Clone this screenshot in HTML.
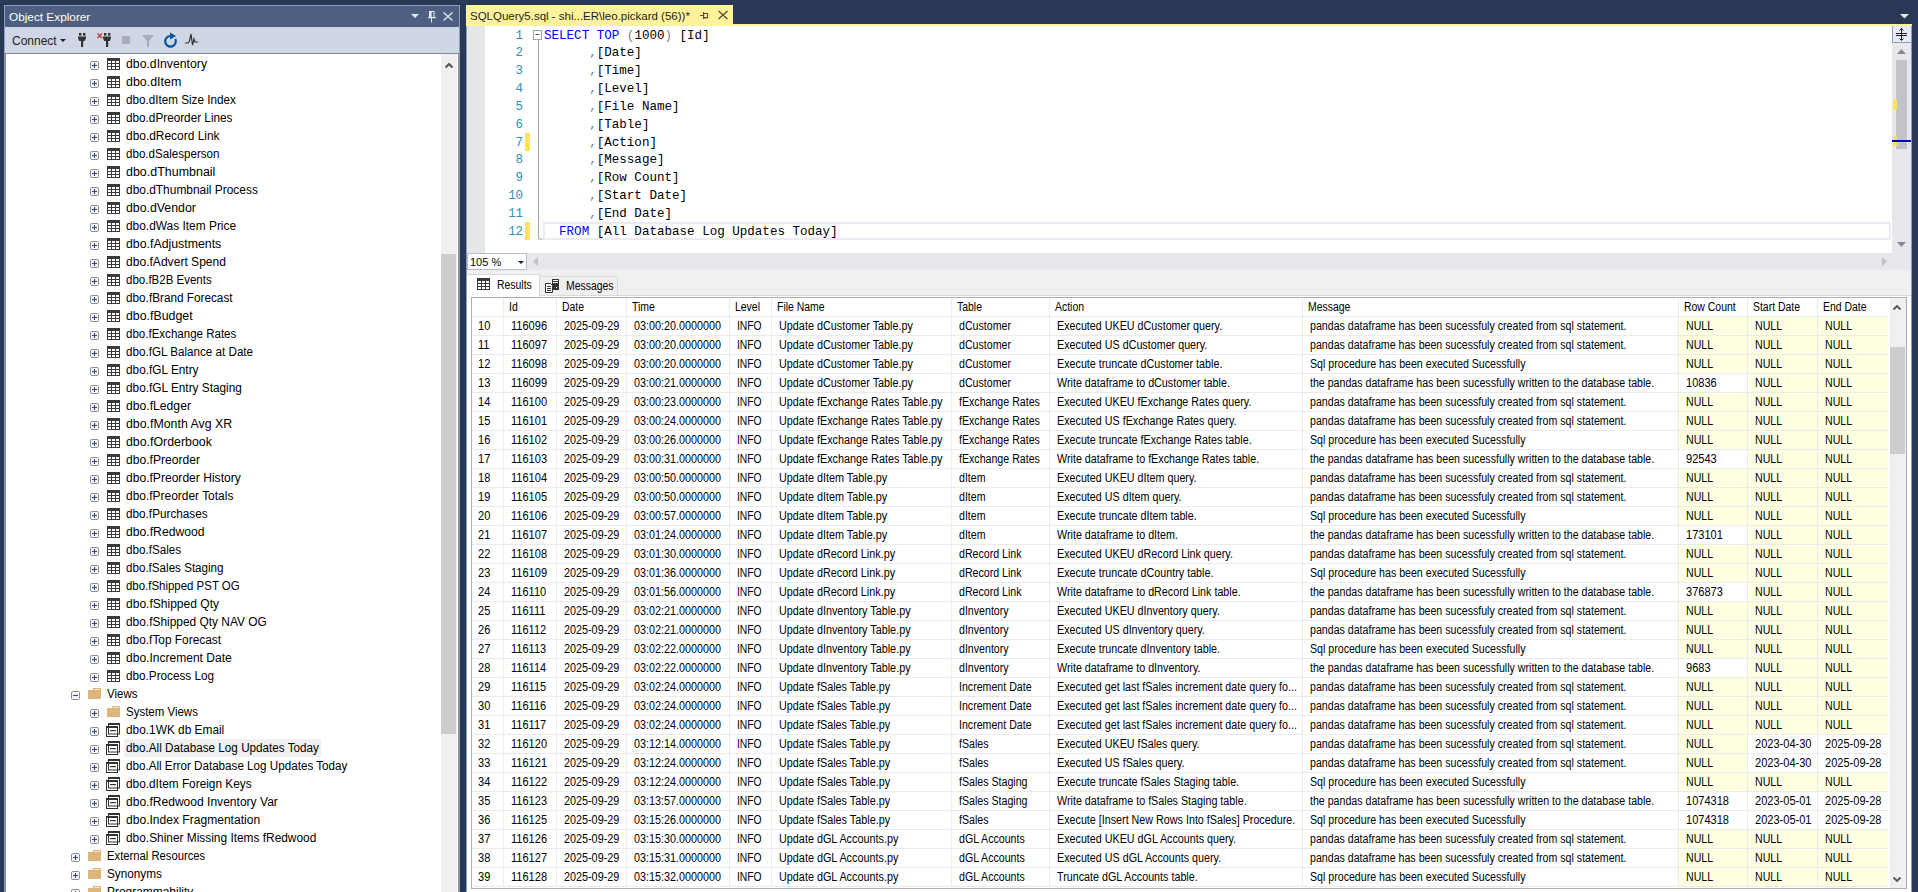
<!DOCTYPE html><html><head><meta charset="utf-8"><title>SSMS</title><style>
*{box-sizing:border-box}
html,body{margin:0;padding:0}
body{width:1918px;height:892px;position:relative;overflow:hidden;background:#293955;font-family:"Liberation Sans",sans-serif;font-size:12px;color:#1e1e1e}
.a{position:absolute}
.tx{position:absolute;white-space:nowrap;line-height:18px;height:18px}
.tr{font-size:12px;color:#000;transform-origin:0 0}
.g{position:absolute;white-space:nowrap;font-size:12px;line-height:19px;height:19px;transform-origin:0 0;color:#000}
.cd{position:absolute;white-space:pre;font-family:"Liberation Mono",monospace;font-size:12.55px;line-height:17.82px;height:18px;color:#000}
.ln{position:absolute;white-space:pre;font-family:"Liberation Mono",monospace;font-size:12.4px;line-height:17.82px;color:#2b91af;text-align:right;width:40px}
.kw{color:#0000ff}.gr{color:#808080}
.bx{position:absolute;width:9px;height:9px;border:1px solid #8c8c8c;border-radius:1.5px;background:linear-gradient(#fff,#f0f0f0)}
</style></head><body>
<div class="a" style="left:4px;top:5px;width:456px;height:887px;border:1px solid #8d9cc0;border-bottom:none;background:#cfd6e5"></div>
<div class="a" style="left:5px;top:6px;width:454px;height:21px;background:#4d6082"></div>
<div class="tx" style="left:9px;top:8px;color:#fff;font-size:11.8px">Object Explorer</div>
<svg class="a" style="left:405px;top:6px" width="54" height="21" viewBox="0 0 54 21"><path d="M6 8h8l-4 4z" fill="#e6e9f0"/><rect x="24.5" y="5.5" width="4.5" height="6" fill="none" stroke="#e6e9f0"/><rect x="25" y="5" width="1.6" height="7" fill="#e6e9f0"/><rect x="23" y="11" width="8" height="1.2" fill="#e6e9f0"/><rect x="26" y="12" width="1" height="4.5" fill="#e6e9f0"/><path d="M38.5 6.5l9 8M47.5 6.5l-9 8" stroke="#e6e9f0" stroke-width="1.3"/></svg>
<div class="tx" style="left:12px;top:32px;color:#1e1e1e;font-size:12px">Connect</div>
<svg class="a" style="left:0;top:27px" width="210" height="26" viewBox="0 0 210 26"><path d="M60 12h6l-3 3z" fill="#1e1e1e"/><rect x="79" y="6" width="2.4" height="2.6" fill="#333"/><rect x="83" y="6" width="2.4" height="2.6" fill="#333"/><path d="M78 9.6h8v1.4l-1.2 3h-5.6l-1.2-3z" fill="#333"/><rect x="81" y="13.5" width="2.2" height="6.5" fill="#333"/><path d="M97.5 6.5l4.5 4.5M102 6.5l-4.5 4.5" stroke="#c9362c" stroke-width="1.2"/><rect x="104" y="6" width="2.4" height="2.6" fill="#333"/><rect x="108" y="6" width="2.4" height="2.6" fill="#333"/><path d="M103 9.6h8v1.4l-1.2 3h-5.6l-1.2-3z" fill="#333"/><rect x="106" y="13.5" width="2.2" height="6.5" fill="#333"/><rect x="122" y="9" width="8" height="8" fill="#a8adb9"/><path d="M142 8h12l-5 6v6h-2v-6z" fill="#a8adb9"/><path d="M170.5 9A5.3 5.3 0 1 0 175.3 12" fill="none" stroke="#00539c" stroke-width="2.2"/><path d="M170 5.6l6 3.4l-6 3.4z" fill="#00539c"/><path d="M185 16h3l1.5 -2l1.5 -7l1.5 11l1.5 -6l1 3h3" fill="none" stroke="#333" stroke-width="1.2"/></svg>
<div class="a" style="left:5px;top:53px;width:454px;height:1px;background:#828a99"></div>
<div class="a" style="left:5px;top:54px;width:454px;height:838px;background:#fff;overflow:hidden">
<svg class="a" style="left:85px;top:7px" width="9" height="9" viewBox="0 0 9 9"><rect x="0.5" y="0.5" width="8" height="8" rx="1.2" fill="#f7f7f7" stroke="#8c8c8c"/><path d="M2 4.5h5" stroke="#2e4d8f" stroke-width="1.1"/><path d="M4.5 2v5" stroke="#2e4d8f" stroke-width="1.1"/></svg>
<svg class="a" style="left:102px;top:4px" width="13" height="12" viewBox="0 0 13 12"><rect width="13" height="12" fill="#3a3a3a"/><rect x="1" y="3" width="3" height="2" fill="#fff"/><rect x="1" y="6" width="3" height="2" fill="#fff"/><rect x="1" y="9" width="3" height="2" fill="#fff"/><rect x="5" y="3" width="3" height="2" fill="#fff"/><rect x="5" y="6" width="3" height="2" fill="#fff"/><rect x="5" y="9" width="3" height="2" fill="#fff"/><rect x="9" y="3" width="3" height="2" fill="#fff"/><rect x="9" y="6" width="3" height="2" fill="#fff"/><rect x="9" y="9" width="3" height="2" fill="#fff"/></svg>
<div class="tx tr" style="left:121px;top:1px;transform:scaleX(1.0208)">dbo.dInventory</div>
<svg class="a" style="left:85px;top:25px" width="9" height="9" viewBox="0 0 9 9"><rect x="0.5" y="0.5" width="8" height="8" rx="1.2" fill="#f7f7f7" stroke="#8c8c8c"/><path d="M2 4.5h5" stroke="#2e4d8f" stroke-width="1.1"/><path d="M4.5 2v5" stroke="#2e4d8f" stroke-width="1.1"/></svg>
<svg class="a" style="left:102px;top:22px" width="13" height="12" viewBox="0 0 13 12"><rect width="13" height="12" fill="#3a3a3a"/><rect x="1" y="3" width="3" height="2" fill="#fff"/><rect x="1" y="6" width="3" height="2" fill="#fff"/><rect x="1" y="9" width="3" height="2" fill="#fff"/><rect x="5" y="3" width="3" height="2" fill="#fff"/><rect x="5" y="6" width="3" height="2" fill="#fff"/><rect x="5" y="9" width="3" height="2" fill="#fff"/><rect x="9" y="3" width="3" height="2" fill="#fff"/><rect x="9" y="6" width="3" height="2" fill="#fff"/><rect x="9" y="9" width="3" height="2" fill="#fff"/></svg>
<div class="tx tr" style="left:121px;top:19px;transform:scaleX(1.0364)">dbo.dItem</div>
<svg class="a" style="left:85px;top:43px" width="9" height="9" viewBox="0 0 9 9"><rect x="0.5" y="0.5" width="8" height="8" rx="1.2" fill="#f7f7f7" stroke="#8c8c8c"/><path d="M2 4.5h5" stroke="#2e4d8f" stroke-width="1.1"/><path d="M4.5 2v5" stroke="#2e4d8f" stroke-width="1.1"/></svg>
<svg class="a" style="left:102px;top:40px" width="13" height="12" viewBox="0 0 13 12"><rect width="13" height="12" fill="#3a3a3a"/><rect x="1" y="3" width="3" height="2" fill="#fff"/><rect x="1" y="6" width="3" height="2" fill="#fff"/><rect x="1" y="9" width="3" height="2" fill="#fff"/><rect x="5" y="3" width="3" height="2" fill="#fff"/><rect x="5" y="6" width="3" height="2" fill="#fff"/><rect x="5" y="9" width="3" height="2" fill="#fff"/><rect x="9" y="3" width="3" height="2" fill="#fff"/><rect x="9" y="6" width="3" height="2" fill="#fff"/><rect x="9" y="9" width="3" height="2" fill="#fff"/></svg>
<div class="tx tr" style="left:121px;top:37px;transform:scaleX(0.9740)">dbo.dItem Size Index</div>
<svg class="a" style="left:85px;top:61px" width="9" height="9" viewBox="0 0 9 9"><rect x="0.5" y="0.5" width="8" height="8" rx="1.2" fill="#f7f7f7" stroke="#8c8c8c"/><path d="M2 4.5h5" stroke="#2e4d8f" stroke-width="1.1"/><path d="M4.5 2v5" stroke="#2e4d8f" stroke-width="1.1"/></svg>
<svg class="a" style="left:102px;top:58px" width="13" height="12" viewBox="0 0 13 12"><rect width="13" height="12" fill="#3a3a3a"/><rect x="1" y="3" width="3" height="2" fill="#fff"/><rect x="1" y="6" width="3" height="2" fill="#fff"/><rect x="1" y="9" width="3" height="2" fill="#fff"/><rect x="5" y="3" width="3" height="2" fill="#fff"/><rect x="5" y="6" width="3" height="2" fill="#fff"/><rect x="5" y="9" width="3" height="2" fill="#fff"/><rect x="9" y="3" width="3" height="2" fill="#fff"/><rect x="9" y="6" width="3" height="2" fill="#fff"/><rect x="9" y="9" width="3" height="2" fill="#fff"/></svg>
<div class="tx tr" style="left:121px;top:55px;transform:scaleX(0.9789)">dbo.dPreorder Lines</div>
<svg class="a" style="left:85px;top:79px" width="9" height="9" viewBox="0 0 9 9"><rect x="0.5" y="0.5" width="8" height="8" rx="1.2" fill="#f7f7f7" stroke="#8c8c8c"/><path d="M2 4.5h5" stroke="#2e4d8f" stroke-width="1.1"/><path d="M4.5 2v5" stroke="#2e4d8f" stroke-width="1.1"/></svg>
<svg class="a" style="left:102px;top:76px" width="13" height="12" viewBox="0 0 13 12"><rect width="13" height="12" fill="#3a3a3a"/><rect x="1" y="3" width="3" height="2" fill="#fff"/><rect x="1" y="6" width="3" height="2" fill="#fff"/><rect x="1" y="9" width="3" height="2" fill="#fff"/><rect x="5" y="3" width="3" height="2" fill="#fff"/><rect x="5" y="6" width="3" height="2" fill="#fff"/><rect x="5" y="9" width="3" height="2" fill="#fff"/><rect x="9" y="3" width="3" height="2" fill="#fff"/><rect x="9" y="6" width="3" height="2" fill="#fff"/><rect x="9" y="9" width="3" height="2" fill="#fff"/></svg>
<div class="tx tr" style="left:121px;top:73px;transform:scaleX(0.9945)">dbo.dRecord Link</div>
<svg class="a" style="left:85px;top:97px" width="9" height="9" viewBox="0 0 9 9"><rect x="0.5" y="0.5" width="8" height="8" rx="1.2" fill="#f7f7f7" stroke="#8c8c8c"/><path d="M2 4.5h5" stroke="#2e4d8f" stroke-width="1.1"/><path d="M4.5 2v5" stroke="#2e4d8f" stroke-width="1.1"/></svg>
<svg class="a" style="left:102px;top:94px" width="13" height="12" viewBox="0 0 13 12"><rect width="13" height="12" fill="#3a3a3a"/><rect x="1" y="3" width="3" height="2" fill="#fff"/><rect x="1" y="6" width="3" height="2" fill="#fff"/><rect x="1" y="9" width="3" height="2" fill="#fff"/><rect x="5" y="3" width="3" height="2" fill="#fff"/><rect x="5" y="6" width="3" height="2" fill="#fff"/><rect x="5" y="9" width="3" height="2" fill="#fff"/><rect x="9" y="3" width="3" height="2" fill="#fff"/><rect x="9" y="6" width="3" height="2" fill="#fff"/><rect x="9" y="9" width="3" height="2" fill="#fff"/></svg>
<div class="tx tr" style="left:121px;top:91px;transform:scaleX(0.9662)">dbo.dSalesperson</div>
<svg class="a" style="left:85px;top:115px" width="9" height="9" viewBox="0 0 9 9"><rect x="0.5" y="0.5" width="8" height="8" rx="1.2" fill="#f7f7f7" stroke="#8c8c8c"/><path d="M2 4.5h5" stroke="#2e4d8f" stroke-width="1.1"/><path d="M4.5 2v5" stroke="#2e4d8f" stroke-width="1.1"/></svg>
<svg class="a" style="left:102px;top:112px" width="13" height="12" viewBox="0 0 13 12"><rect width="13" height="12" fill="#3a3a3a"/><rect x="1" y="3" width="3" height="2" fill="#fff"/><rect x="1" y="6" width="3" height="2" fill="#fff"/><rect x="1" y="9" width="3" height="2" fill="#fff"/><rect x="5" y="3" width="3" height="2" fill="#fff"/><rect x="5" y="6" width="3" height="2" fill="#fff"/><rect x="5" y="9" width="3" height="2" fill="#fff"/><rect x="9" y="3" width="3" height="2" fill="#fff"/><rect x="9" y="6" width="3" height="2" fill="#fff"/><rect x="9" y="9" width="3" height="2" fill="#fff"/></svg>
<div class="tx tr" style="left:121px;top:109px;transform:scaleX(1.0384)">dbo.dThumbnail</div>
<svg class="a" style="left:85px;top:133px" width="9" height="9" viewBox="0 0 9 9"><rect x="0.5" y="0.5" width="8" height="8" rx="1.2" fill="#f7f7f7" stroke="#8c8c8c"/><path d="M2 4.5h5" stroke="#2e4d8f" stroke-width="1.1"/><path d="M4.5 2v5" stroke="#2e4d8f" stroke-width="1.1"/></svg>
<svg class="a" style="left:102px;top:130px" width="13" height="12" viewBox="0 0 13 12"><rect width="13" height="12" fill="#3a3a3a"/><rect x="1" y="3" width="3" height="2" fill="#fff"/><rect x="1" y="6" width="3" height="2" fill="#fff"/><rect x="1" y="9" width="3" height="2" fill="#fff"/><rect x="5" y="3" width="3" height="2" fill="#fff"/><rect x="5" y="6" width="3" height="2" fill="#fff"/><rect x="5" y="9" width="3" height="2" fill="#fff"/><rect x="9" y="3" width="3" height="2" fill="#fff"/><rect x="9" y="6" width="3" height="2" fill="#fff"/><rect x="9" y="9" width="3" height="2" fill="#fff"/></svg>
<div class="tx tr" style="left:121px;top:127px;transform:scaleX(0.9935)">dbo.dThumbnail Process</div>
<svg class="a" style="left:85px;top:151px" width="9" height="9" viewBox="0 0 9 9"><rect x="0.5" y="0.5" width="8" height="8" rx="1.2" fill="#f7f7f7" stroke="#8c8c8c"/><path d="M2 4.5h5" stroke="#2e4d8f" stroke-width="1.1"/><path d="M4.5 2v5" stroke="#2e4d8f" stroke-width="1.1"/></svg>
<svg class="a" style="left:102px;top:148px" width="13" height="12" viewBox="0 0 13 12"><rect width="13" height="12" fill="#3a3a3a"/><rect x="1" y="3" width="3" height="2" fill="#fff"/><rect x="1" y="6" width="3" height="2" fill="#fff"/><rect x="1" y="9" width="3" height="2" fill="#fff"/><rect x="5" y="3" width="3" height="2" fill="#fff"/><rect x="5" y="6" width="3" height="2" fill="#fff"/><rect x="5" y="9" width="3" height="2" fill="#fff"/><rect x="9" y="3" width="3" height="2" fill="#fff"/><rect x="9" y="6" width="3" height="2" fill="#fff"/><rect x="9" y="9" width="3" height="2" fill="#fff"/></svg>
<div class="tx tr" style="left:121px;top:145px;transform:scaleX(1.0267)">dbo.dVendor</div>
<svg class="a" style="left:85px;top:169px" width="9" height="9" viewBox="0 0 9 9"><rect x="0.5" y="0.5" width="8" height="8" rx="1.2" fill="#f7f7f7" stroke="#8c8c8c"/><path d="M2 4.5h5" stroke="#2e4d8f" stroke-width="1.1"/><path d="M4.5 2v5" stroke="#2e4d8f" stroke-width="1.1"/></svg>
<svg class="a" style="left:102px;top:166px" width="13" height="12" viewBox="0 0 13 12"><rect width="13" height="12" fill="#3a3a3a"/><rect x="1" y="3" width="3" height="2" fill="#fff"/><rect x="1" y="6" width="3" height="2" fill="#fff"/><rect x="1" y="9" width="3" height="2" fill="#fff"/><rect x="5" y="3" width="3" height="2" fill="#fff"/><rect x="5" y="6" width="3" height="2" fill="#fff"/><rect x="5" y="9" width="3" height="2" fill="#fff"/><rect x="9" y="3" width="3" height="2" fill="#fff"/><rect x="9" y="6" width="3" height="2" fill="#fff"/><rect x="9" y="9" width="3" height="2" fill="#fff"/></svg>
<div class="tx tr" style="left:121px;top:163px;transform:scaleX(0.9925)">dbo.dWas Item Price</div>
<svg class="a" style="left:85px;top:187px" width="9" height="9" viewBox="0 0 9 9"><rect x="0.5" y="0.5" width="8" height="8" rx="1.2" fill="#f7f7f7" stroke="#8c8c8c"/><path d="M2 4.5h5" stroke="#2e4d8f" stroke-width="1.1"/><path d="M4.5 2v5" stroke="#2e4d8f" stroke-width="1.1"/></svg>
<svg class="a" style="left:102px;top:184px" width="13" height="12" viewBox="0 0 13 12"><rect width="13" height="12" fill="#3a3a3a"/><rect x="1" y="3" width="3" height="2" fill="#fff"/><rect x="1" y="6" width="3" height="2" fill="#fff"/><rect x="1" y="9" width="3" height="2" fill="#fff"/><rect x="5" y="3" width="3" height="2" fill="#fff"/><rect x="5" y="6" width="3" height="2" fill="#fff"/><rect x="5" y="9" width="3" height="2" fill="#fff"/><rect x="9" y="3" width="3" height="2" fill="#fff"/><rect x="9" y="6" width="3" height="2" fill="#fff"/><rect x="9" y="9" width="3" height="2" fill="#fff"/></svg>
<div class="tx tr" style="left:121px;top:181px;transform:scaleX(1.0276)">dbo.fAdjustments</div>
<svg class="a" style="left:85px;top:205px" width="9" height="9" viewBox="0 0 9 9"><rect x="0.5" y="0.5" width="8" height="8" rx="1.2" fill="#f7f7f7" stroke="#8c8c8c"/><path d="M2 4.5h5" stroke="#2e4d8f" stroke-width="1.1"/><path d="M4.5 2v5" stroke="#2e4d8f" stroke-width="1.1"/></svg>
<svg class="a" style="left:102px;top:202px" width="13" height="12" viewBox="0 0 13 12"><rect width="13" height="12" fill="#3a3a3a"/><rect x="1" y="3" width="3" height="2" fill="#fff"/><rect x="1" y="6" width="3" height="2" fill="#fff"/><rect x="1" y="9" width="3" height="2" fill="#fff"/><rect x="5" y="3" width="3" height="2" fill="#fff"/><rect x="5" y="6" width="3" height="2" fill="#fff"/><rect x="5" y="9" width="3" height="2" fill="#fff"/><rect x="9" y="3" width="3" height="2" fill="#fff"/><rect x="9" y="6" width="3" height="2" fill="#fff"/><rect x="9" y="9" width="3" height="2" fill="#fff"/></svg>
<div class="tx tr" style="left:121px;top:199px;transform:scaleX(1.0062)">dbo.fAdvert Spend</div>
<svg class="a" style="left:85px;top:223px" width="9" height="9" viewBox="0 0 9 9"><rect x="0.5" y="0.5" width="8" height="8" rx="1.2" fill="#f7f7f7" stroke="#8c8c8c"/><path d="M2 4.5h5" stroke="#2e4d8f" stroke-width="1.1"/><path d="M4.5 2v5" stroke="#2e4d8f" stroke-width="1.1"/></svg>
<svg class="a" style="left:102px;top:220px" width="13" height="12" viewBox="0 0 13 12"><rect width="13" height="12" fill="#3a3a3a"/><rect x="1" y="3" width="3" height="2" fill="#fff"/><rect x="1" y="6" width="3" height="2" fill="#fff"/><rect x="1" y="9" width="3" height="2" fill="#fff"/><rect x="5" y="3" width="3" height="2" fill="#fff"/><rect x="5" y="6" width="3" height="2" fill="#fff"/><rect x="5" y="9" width="3" height="2" fill="#fff"/><rect x="9" y="3" width="3" height="2" fill="#fff"/><rect x="9" y="6" width="3" height="2" fill="#fff"/><rect x="9" y="9" width="3" height="2" fill="#fff"/></svg>
<div class="tx tr" style="left:121px;top:217px;transform:scaleX(0.9584)">dbo.fB2B Events</div>
<svg class="a" style="left:85px;top:241px" width="9" height="9" viewBox="0 0 9 9"><rect x="0.5" y="0.5" width="8" height="8" rx="1.2" fill="#f7f7f7" stroke="#8c8c8c"/><path d="M2 4.5h5" stroke="#2e4d8f" stroke-width="1.1"/><path d="M4.5 2v5" stroke="#2e4d8f" stroke-width="1.1"/></svg>
<svg class="a" style="left:102px;top:238px" width="13" height="12" viewBox="0 0 13 12"><rect width="13" height="12" fill="#3a3a3a"/><rect x="1" y="3" width="3" height="2" fill="#fff"/><rect x="1" y="6" width="3" height="2" fill="#fff"/><rect x="1" y="9" width="3" height="2" fill="#fff"/><rect x="5" y="3" width="3" height="2" fill="#fff"/><rect x="5" y="6" width="3" height="2" fill="#fff"/><rect x="5" y="9" width="3" height="2" fill="#fff"/><rect x="9" y="3" width="3" height="2" fill="#fff"/><rect x="9" y="6" width="3" height="2" fill="#fff"/><rect x="9" y="9" width="3" height="2" fill="#fff"/></svg>
<div class="tx tr" style="left:121px;top:235px;transform:scaleX(0.9799)">dbo.fBrand Forecast</div>
<svg class="a" style="left:85px;top:259px" width="9" height="9" viewBox="0 0 9 9"><rect x="0.5" y="0.5" width="8" height="8" rx="1.2" fill="#f7f7f7" stroke="#8c8c8c"/><path d="M2 4.5h5" stroke="#2e4d8f" stroke-width="1.1"/><path d="M4.5 2v5" stroke="#2e4d8f" stroke-width="1.1"/></svg>
<svg class="a" style="left:102px;top:256px" width="13" height="12" viewBox="0 0 13 12"><rect width="13" height="12" fill="#3a3a3a"/><rect x="1" y="3" width="3" height="2" fill="#fff"/><rect x="1" y="6" width="3" height="2" fill="#fff"/><rect x="1" y="9" width="3" height="2" fill="#fff"/><rect x="5" y="3" width="3" height="2" fill="#fff"/><rect x="5" y="6" width="3" height="2" fill="#fff"/><rect x="5" y="9" width="3" height="2" fill="#fff"/><rect x="9" y="3" width="3" height="2" fill="#fff"/><rect x="9" y="6" width="3" height="2" fill="#fff"/><rect x="9" y="9" width="3" height="2" fill="#fff"/></svg>
<div class="tx tr" style="left:121px;top:253px;transform:scaleX(1.0296)">dbo.fBudget</div>
<svg class="a" style="left:85px;top:277px" width="9" height="9" viewBox="0 0 9 9"><rect x="0.5" y="0.5" width="8" height="8" rx="1.2" fill="#f7f7f7" stroke="#8c8c8c"/><path d="M2 4.5h5" stroke="#2e4d8f" stroke-width="1.1"/><path d="M4.5 2v5" stroke="#2e4d8f" stroke-width="1.1"/></svg>
<svg class="a" style="left:102px;top:274px" width="13" height="12" viewBox="0 0 13 12"><rect width="13" height="12" fill="#3a3a3a"/><rect x="1" y="3" width="3" height="2" fill="#fff"/><rect x="1" y="6" width="3" height="2" fill="#fff"/><rect x="1" y="9" width="3" height="2" fill="#fff"/><rect x="5" y="3" width="3" height="2" fill="#fff"/><rect x="5" y="6" width="3" height="2" fill="#fff"/><rect x="5" y="9" width="3" height="2" fill="#fff"/><rect x="9" y="3" width="3" height="2" fill="#fff"/><rect x="9" y="6" width="3" height="2" fill="#fff"/><rect x="9" y="9" width="3" height="2" fill="#fff"/></svg>
<div class="tx tr" style="left:121px;top:271px;transform:scaleX(0.9613)">dbo.fExchange Rates</div>
<svg class="a" style="left:85px;top:295px" width="9" height="9" viewBox="0 0 9 9"><rect x="0.5" y="0.5" width="8" height="8" rx="1.2" fill="#f7f7f7" stroke="#8c8c8c"/><path d="M2 4.5h5" stroke="#2e4d8f" stroke-width="1.1"/><path d="M4.5 2v5" stroke="#2e4d8f" stroke-width="1.1"/></svg>
<svg class="a" style="left:102px;top:292px" width="13" height="12" viewBox="0 0 13 12"><rect width="13" height="12" fill="#3a3a3a"/><rect x="1" y="3" width="3" height="2" fill="#fff"/><rect x="1" y="6" width="3" height="2" fill="#fff"/><rect x="1" y="9" width="3" height="2" fill="#fff"/><rect x="5" y="3" width="3" height="2" fill="#fff"/><rect x="5" y="6" width="3" height="2" fill="#fff"/><rect x="5" y="9" width="3" height="2" fill="#fff"/><rect x="9" y="3" width="3" height="2" fill="#fff"/><rect x="9" y="6" width="3" height="2" fill="#fff"/><rect x="9" y="9" width="3" height="2" fill="#fff"/></svg>
<div class="tx tr" style="left:121px;top:289px;transform:scaleX(0.9701)">dbo.fGL Balance at Date</div>
<svg class="a" style="left:85px;top:313px" width="9" height="9" viewBox="0 0 9 9"><rect x="0.5" y="0.5" width="8" height="8" rx="1.2" fill="#f7f7f7" stroke="#8c8c8c"/><path d="M2 4.5h5" stroke="#2e4d8f" stroke-width="1.1"/><path d="M4.5 2v5" stroke="#2e4d8f" stroke-width="1.1"/></svg>
<svg class="a" style="left:102px;top:310px" width="13" height="12" viewBox="0 0 13 12"><rect width="13" height="12" fill="#3a3a3a"/><rect x="1" y="3" width="3" height="2" fill="#fff"/><rect x="1" y="6" width="3" height="2" fill="#fff"/><rect x="1" y="9" width="3" height="2" fill="#fff"/><rect x="5" y="3" width="3" height="2" fill="#fff"/><rect x="5" y="6" width="3" height="2" fill="#fff"/><rect x="5" y="9" width="3" height="2" fill="#fff"/><rect x="9" y="3" width="3" height="2" fill="#fff"/><rect x="9" y="6" width="3" height="2" fill="#fff"/><rect x="9" y="9" width="3" height="2" fill="#fff"/></svg>
<div class="tx tr" style="left:121px;top:307px;transform:scaleX(0.9848)">dbo.fGL Entry</div>
<svg class="a" style="left:85px;top:331px" width="9" height="9" viewBox="0 0 9 9"><rect x="0.5" y="0.5" width="8" height="8" rx="1.2" fill="#f7f7f7" stroke="#8c8c8c"/><path d="M2 4.5h5" stroke="#2e4d8f" stroke-width="1.1"/><path d="M4.5 2v5" stroke="#2e4d8f" stroke-width="1.1"/></svg>
<svg class="a" style="left:102px;top:328px" width="13" height="12" viewBox="0 0 13 12"><rect width="13" height="12" fill="#3a3a3a"/><rect x="1" y="3" width="3" height="2" fill="#fff"/><rect x="1" y="6" width="3" height="2" fill="#fff"/><rect x="1" y="9" width="3" height="2" fill="#fff"/><rect x="5" y="3" width="3" height="2" fill="#fff"/><rect x="5" y="6" width="3" height="2" fill="#fff"/><rect x="5" y="9" width="3" height="2" fill="#fff"/><rect x="9" y="3" width="3" height="2" fill="#fff"/><rect x="9" y="6" width="3" height="2" fill="#fff"/><rect x="9" y="9" width="3" height="2" fill="#fff"/></svg>
<div class="tx tr" style="left:121px;top:325px;transform:scaleX(0.9848)">dbo.fGL Entry Staging</div>
<svg class="a" style="left:85px;top:349px" width="9" height="9" viewBox="0 0 9 9"><rect x="0.5" y="0.5" width="8" height="8" rx="1.2" fill="#f7f7f7" stroke="#8c8c8c"/><path d="M2 4.5h5" stroke="#2e4d8f" stroke-width="1.1"/><path d="M4.5 2v5" stroke="#2e4d8f" stroke-width="1.1"/></svg>
<svg class="a" style="left:102px;top:346px" width="13" height="12" viewBox="0 0 13 12"><rect width="13" height="12" fill="#3a3a3a"/><rect x="1" y="3" width="3" height="2" fill="#fff"/><rect x="1" y="6" width="3" height="2" fill="#fff"/><rect x="1" y="9" width="3" height="2" fill="#fff"/><rect x="5" y="3" width="3" height="2" fill="#fff"/><rect x="5" y="6" width="3" height="2" fill="#fff"/><rect x="5" y="9" width="3" height="2" fill="#fff"/><rect x="9" y="3" width="3" height="2" fill="#fff"/><rect x="9" y="6" width="3" height="2" fill="#fff"/><rect x="9" y="9" width="3" height="2" fill="#fff"/></svg>
<div class="tx tr" style="left:121px;top:343px;transform:scaleX(1.0140)">dbo.fLedger</div>
<svg class="a" style="left:85px;top:367px" width="9" height="9" viewBox="0 0 9 9"><rect x="0.5" y="0.5" width="8" height="8" rx="1.2" fill="#f7f7f7" stroke="#8c8c8c"/><path d="M2 4.5h5" stroke="#2e4d8f" stroke-width="1.1"/><path d="M4.5 2v5" stroke="#2e4d8f" stroke-width="1.1"/></svg>
<svg class="a" style="left:102px;top:364px" width="13" height="12" viewBox="0 0 13 12"><rect width="13" height="12" fill="#3a3a3a"/><rect x="1" y="3" width="3" height="2" fill="#fff"/><rect x="1" y="6" width="3" height="2" fill="#fff"/><rect x="1" y="9" width="3" height="2" fill="#fff"/><rect x="5" y="3" width="3" height="2" fill="#fff"/><rect x="5" y="6" width="3" height="2" fill="#fff"/><rect x="5" y="9" width="3" height="2" fill="#fff"/><rect x="9" y="3" width="3" height="2" fill="#fff"/><rect x="9" y="6" width="3" height="2" fill="#fff"/><rect x="9" y="9" width="3" height="2" fill="#fff"/></svg>
<div class="tx tr" style="left:121px;top:361px;transform:scaleX(1.0286)">dbo.fMonth Avg XR</div>
<svg class="a" style="left:85px;top:385px" width="9" height="9" viewBox="0 0 9 9"><rect x="0.5" y="0.5" width="8" height="8" rx="1.2" fill="#f7f7f7" stroke="#8c8c8c"/><path d="M2 4.5h5" stroke="#2e4d8f" stroke-width="1.1"/><path d="M4.5 2v5" stroke="#2e4d8f" stroke-width="1.1"/></svg>
<svg class="a" style="left:102px;top:382px" width="13" height="12" viewBox="0 0 13 12"><rect width="13" height="12" fill="#3a3a3a"/><rect x="1" y="3" width="3" height="2" fill="#fff"/><rect x="1" y="6" width="3" height="2" fill="#fff"/><rect x="1" y="9" width="3" height="2" fill="#fff"/><rect x="5" y="3" width="3" height="2" fill="#fff"/><rect x="5" y="6" width="3" height="2" fill="#fff"/><rect x="5" y="9" width="3" height="2" fill="#fff"/><rect x="9" y="3" width="3" height="2" fill="#fff"/><rect x="9" y="6" width="3" height="2" fill="#fff"/><rect x="9" y="9" width="3" height="2" fill="#fff"/></svg>
<div class="tx tr" style="left:121px;top:379px;transform:scaleX(1.0296)">dbo.fOrderbook</div>
<svg class="a" style="left:85px;top:403px" width="9" height="9" viewBox="0 0 9 9"><rect x="0.5" y="0.5" width="8" height="8" rx="1.2" fill="#f7f7f7" stroke="#8c8c8c"/><path d="M2 4.5h5" stroke="#2e4d8f" stroke-width="1.1"/><path d="M4.5 2v5" stroke="#2e4d8f" stroke-width="1.1"/></svg>
<svg class="a" style="left:102px;top:400px" width="13" height="12" viewBox="0 0 13 12"><rect width="13" height="12" fill="#3a3a3a"/><rect x="1" y="3" width="3" height="2" fill="#fff"/><rect x="1" y="6" width="3" height="2" fill="#fff"/><rect x="1" y="9" width="3" height="2" fill="#fff"/><rect x="5" y="3" width="3" height="2" fill="#fff"/><rect x="5" y="6" width="3" height="2" fill="#fff"/><rect x="5" y="9" width="3" height="2" fill="#fff"/><rect x="9" y="3" width="3" height="2" fill="#fff"/><rect x="9" y="6" width="3" height="2" fill="#fff"/><rect x="9" y="9" width="3" height="2" fill="#fff"/></svg>
<div class="tx tr" style="left:121px;top:397px;transform:scaleX(1.0081)">dbo.fPreorder</div>
<svg class="a" style="left:85px;top:421px" width="9" height="9" viewBox="0 0 9 9"><rect x="0.5" y="0.5" width="8" height="8" rx="1.2" fill="#f7f7f7" stroke="#8c8c8c"/><path d="M2 4.5h5" stroke="#2e4d8f" stroke-width="1.1"/><path d="M4.5 2v5" stroke="#2e4d8f" stroke-width="1.1"/></svg>
<svg class="a" style="left:102px;top:418px" width="13" height="12" viewBox="0 0 13 12"><rect width="13" height="12" fill="#3a3a3a"/><rect x="1" y="3" width="3" height="2" fill="#fff"/><rect x="1" y="6" width="3" height="2" fill="#fff"/><rect x="1" y="9" width="3" height="2" fill="#fff"/><rect x="5" y="3" width="3" height="2" fill="#fff"/><rect x="5" y="6" width="3" height="2" fill="#fff"/><rect x="5" y="9" width="3" height="2" fill="#fff"/><rect x="9" y="3" width="3" height="2" fill="#fff"/><rect x="9" y="6" width="3" height="2" fill="#fff"/><rect x="9" y="9" width="3" height="2" fill="#fff"/></svg>
<div class="tx tr" style="left:121px;top:415px;transform:scaleX(1.0062)">dbo.fPreorder History</div>
<svg class="a" style="left:85px;top:439px" width="9" height="9" viewBox="0 0 9 9"><rect x="0.5" y="0.5" width="8" height="8" rx="1.2" fill="#f7f7f7" stroke="#8c8c8c"/><path d="M2 4.5h5" stroke="#2e4d8f" stroke-width="1.1"/><path d="M4.5 2v5" stroke="#2e4d8f" stroke-width="1.1"/></svg>
<svg class="a" style="left:102px;top:436px" width="13" height="12" viewBox="0 0 13 12"><rect width="13" height="12" fill="#3a3a3a"/><rect x="1" y="3" width="3" height="2" fill="#fff"/><rect x="1" y="6" width="3" height="2" fill="#fff"/><rect x="1" y="9" width="3" height="2" fill="#fff"/><rect x="5" y="3" width="3" height="2" fill="#fff"/><rect x="5" y="6" width="3" height="2" fill="#fff"/><rect x="5" y="9" width="3" height="2" fill="#fff"/><rect x="9" y="3" width="3" height="2" fill="#fff"/><rect x="9" y="6" width="3" height="2" fill="#fff"/><rect x="9" y="9" width="3" height="2" fill="#fff"/></svg>
<div class="tx tr" style="left:121px;top:433px;transform:scaleX(0.9955)">dbo.fPreorder Totals</div>
<svg class="a" style="left:85px;top:457px" width="9" height="9" viewBox="0 0 9 9"><rect x="0.5" y="0.5" width="8" height="8" rx="1.2" fill="#f7f7f7" stroke="#8c8c8c"/><path d="M2 4.5h5" stroke="#2e4d8f" stroke-width="1.1"/><path d="M4.5 2v5" stroke="#2e4d8f" stroke-width="1.1"/></svg>
<svg class="a" style="left:102px;top:454px" width="13" height="12" viewBox="0 0 13 12"><rect width="13" height="12" fill="#3a3a3a"/><rect x="1" y="3" width="3" height="2" fill="#fff"/><rect x="1" y="6" width="3" height="2" fill="#fff"/><rect x="1" y="9" width="3" height="2" fill="#fff"/><rect x="5" y="3" width="3" height="2" fill="#fff"/><rect x="5" y="6" width="3" height="2" fill="#fff"/><rect x="5" y="9" width="3" height="2" fill="#fff"/><rect x="9" y="3" width="3" height="2" fill="#fff"/><rect x="9" y="6" width="3" height="2" fill="#fff"/><rect x="9" y="9" width="3" height="2" fill="#fff"/></svg>
<div class="tx tr" style="left:121px;top:451px;transform:scaleX(0.9789)">dbo.fPurchases</div>
<svg class="a" style="left:85px;top:475px" width="9" height="9" viewBox="0 0 9 9"><rect x="0.5" y="0.5" width="8" height="8" rx="1.2" fill="#f7f7f7" stroke="#8c8c8c"/><path d="M2 4.5h5" stroke="#2e4d8f" stroke-width="1.1"/><path d="M4.5 2v5" stroke="#2e4d8f" stroke-width="1.1"/></svg>
<svg class="a" style="left:102px;top:472px" width="13" height="12" viewBox="0 0 13 12"><rect width="13" height="12" fill="#3a3a3a"/><rect x="1" y="3" width="3" height="2" fill="#fff"/><rect x="1" y="6" width="3" height="2" fill="#fff"/><rect x="1" y="9" width="3" height="2" fill="#fff"/><rect x="5" y="3" width="3" height="2" fill="#fff"/><rect x="5" y="6" width="3" height="2" fill="#fff"/><rect x="5" y="9" width="3" height="2" fill="#fff"/><rect x="9" y="3" width="3" height="2" fill="#fff"/><rect x="9" y="6" width="3" height="2" fill="#fff"/><rect x="9" y="9" width="3" height="2" fill="#fff"/></svg>
<div class="tx tr" style="left:121px;top:469px;transform:scaleX(1.0150)">dbo.fRedwood</div>
<svg class="a" style="left:85px;top:493px" width="9" height="9" viewBox="0 0 9 9"><rect x="0.5" y="0.5" width="8" height="8" rx="1.2" fill="#f7f7f7" stroke="#8c8c8c"/><path d="M2 4.5h5" stroke="#2e4d8f" stroke-width="1.1"/><path d="M4.5 2v5" stroke="#2e4d8f" stroke-width="1.1"/></svg>
<svg class="a" style="left:102px;top:490px" width="13" height="12" viewBox="0 0 13 12"><rect width="13" height="12" fill="#3a3a3a"/><rect x="1" y="3" width="3" height="2" fill="#fff"/><rect x="1" y="6" width="3" height="2" fill="#fff"/><rect x="1" y="9" width="3" height="2" fill="#fff"/><rect x="5" y="3" width="3" height="2" fill="#fff"/><rect x="5" y="6" width="3" height="2" fill="#fff"/><rect x="5" y="9" width="3" height="2" fill="#fff"/><rect x="9" y="3" width="3" height="2" fill="#fff"/><rect x="9" y="6" width="3" height="2" fill="#fff"/><rect x="9" y="9" width="3" height="2" fill="#fff"/></svg>
<div class="tx tr" style="left:121px;top:487px;transform:scaleX(0.9701)">dbo.fSales</div>
<svg class="a" style="left:85px;top:511px" width="9" height="9" viewBox="0 0 9 9"><rect x="0.5" y="0.5" width="8" height="8" rx="1.2" fill="#f7f7f7" stroke="#8c8c8c"/><path d="M2 4.5h5" stroke="#2e4d8f" stroke-width="1.1"/><path d="M4.5 2v5" stroke="#2e4d8f" stroke-width="1.1"/></svg>
<svg class="a" style="left:102px;top:508px" width="13" height="12" viewBox="0 0 13 12"><rect width="13" height="12" fill="#3a3a3a"/><rect x="1" y="3" width="3" height="2" fill="#fff"/><rect x="1" y="6" width="3" height="2" fill="#fff"/><rect x="1" y="9" width="3" height="2" fill="#fff"/><rect x="5" y="3" width="3" height="2" fill="#fff"/><rect x="5" y="6" width="3" height="2" fill="#fff"/><rect x="5" y="9" width="3" height="2" fill="#fff"/><rect x="9" y="3" width="3" height="2" fill="#fff"/><rect x="9" y="6" width="3" height="2" fill="#fff"/><rect x="9" y="9" width="3" height="2" fill="#fff"/></svg>
<div class="tx tr" style="left:121px;top:505px;transform:scaleX(0.9682)">dbo.fSales Staging</div>
<svg class="a" style="left:85px;top:529px" width="9" height="9" viewBox="0 0 9 9"><rect x="0.5" y="0.5" width="8" height="8" rx="1.2" fill="#f7f7f7" stroke="#8c8c8c"/><path d="M2 4.5h5" stroke="#2e4d8f" stroke-width="1.1"/><path d="M4.5 2v5" stroke="#2e4d8f" stroke-width="1.1"/></svg>
<svg class="a" style="left:102px;top:526px" width="13" height="12" viewBox="0 0 13 12"><rect width="13" height="12" fill="#3a3a3a"/><rect x="1" y="3" width="3" height="2" fill="#fff"/><rect x="1" y="6" width="3" height="2" fill="#fff"/><rect x="1" y="9" width="3" height="2" fill="#fff"/><rect x="5" y="3" width="3" height="2" fill="#fff"/><rect x="5" y="6" width="3" height="2" fill="#fff"/><rect x="5" y="9" width="3" height="2" fill="#fff"/><rect x="9" y="3" width="3" height="2" fill="#fff"/><rect x="9" y="6" width="3" height="2" fill="#fff"/><rect x="9" y="9" width="3" height="2" fill="#fff"/></svg>
<div class="tx tr" style="left:121px;top:523px;transform:scaleX(0.9535)">dbo.fShipped PST OG</div>
<svg class="a" style="left:85px;top:547px" width="9" height="9" viewBox="0 0 9 9"><rect x="0.5" y="0.5" width="8" height="8" rx="1.2" fill="#f7f7f7" stroke="#8c8c8c"/><path d="M2 4.5h5" stroke="#2e4d8f" stroke-width="1.1"/><path d="M4.5 2v5" stroke="#2e4d8f" stroke-width="1.1"/></svg>
<svg class="a" style="left:102px;top:544px" width="13" height="12" viewBox="0 0 13 12"><rect width="13" height="12" fill="#3a3a3a"/><rect x="1" y="3" width="3" height="2" fill="#fff"/><rect x="1" y="6" width="3" height="2" fill="#fff"/><rect x="1" y="9" width="3" height="2" fill="#fff"/><rect x="5" y="3" width="3" height="2" fill="#fff"/><rect x="5" y="6" width="3" height="2" fill="#fff"/><rect x="5" y="9" width="3" height="2" fill="#fff"/><rect x="9" y="3" width="3" height="2" fill="#fff"/><rect x="9" y="6" width="3" height="2" fill="#fff"/><rect x="9" y="9" width="3" height="2" fill="#fff"/></svg>
<div class="tx tr" style="left:121px;top:541px;transform:scaleX(1.0033)">dbo.fShipped Qty</div>
<svg class="a" style="left:85px;top:565px" width="9" height="9" viewBox="0 0 9 9"><rect x="0.5" y="0.5" width="8" height="8" rx="1.2" fill="#f7f7f7" stroke="#8c8c8c"/><path d="M2 4.5h5" stroke="#2e4d8f" stroke-width="1.1"/><path d="M4.5 2v5" stroke="#2e4d8f" stroke-width="1.1"/></svg>
<svg class="a" style="left:102px;top:562px" width="13" height="12" viewBox="0 0 13 12"><rect width="13" height="12" fill="#3a3a3a"/><rect x="1" y="3" width="3" height="2" fill="#fff"/><rect x="1" y="6" width="3" height="2" fill="#fff"/><rect x="1" y="9" width="3" height="2" fill="#fff"/><rect x="5" y="3" width="3" height="2" fill="#fff"/><rect x="5" y="6" width="3" height="2" fill="#fff"/><rect x="5" y="9" width="3" height="2" fill="#fff"/><rect x="9" y="3" width="3" height="2" fill="#fff"/><rect x="9" y="6" width="3" height="2" fill="#fff"/><rect x="9" y="9" width="3" height="2" fill="#fff"/></svg>
<div class="tx tr" style="left:121px;top:559px;transform:scaleX(0.9925)">dbo.fShipped Qty NAV OG</div>
<svg class="a" style="left:85px;top:583px" width="9" height="9" viewBox="0 0 9 9"><rect x="0.5" y="0.5" width="8" height="8" rx="1.2" fill="#f7f7f7" stroke="#8c8c8c"/><path d="M2 4.5h5" stroke="#2e4d8f" stroke-width="1.1"/><path d="M4.5 2v5" stroke="#2e4d8f" stroke-width="1.1"/></svg>
<svg class="a" style="left:102px;top:580px" width="13" height="12" viewBox="0 0 13 12"><rect width="13" height="12" fill="#3a3a3a"/><rect x="1" y="3" width="3" height="2" fill="#fff"/><rect x="1" y="6" width="3" height="2" fill="#fff"/><rect x="1" y="9" width="3" height="2" fill="#fff"/><rect x="5" y="3" width="3" height="2" fill="#fff"/><rect x="5" y="6" width="3" height="2" fill="#fff"/><rect x="5" y="9" width="3" height="2" fill="#fff"/><rect x="9" y="3" width="3" height="2" fill="#fff"/><rect x="9" y="6" width="3" height="2" fill="#fff"/><rect x="9" y="9" width="3" height="2" fill="#fff"/></svg>
<div class="tx tr" style="left:121px;top:577px;transform:scaleX(0.9896)">dbo.fTop Forecast</div>
<svg class="a" style="left:85px;top:601px" width="9" height="9" viewBox="0 0 9 9"><rect x="0.5" y="0.5" width="8" height="8" rx="1.2" fill="#f7f7f7" stroke="#8c8c8c"/><path d="M2 4.5h5" stroke="#2e4d8f" stroke-width="1.1"/><path d="M4.5 2v5" stroke="#2e4d8f" stroke-width="1.1"/></svg>
<svg class="a" style="left:102px;top:598px" width="13" height="12" viewBox="0 0 13 12"><rect width="13" height="12" fill="#3a3a3a"/><rect x="1" y="3" width="3" height="2" fill="#fff"/><rect x="1" y="6" width="3" height="2" fill="#fff"/><rect x="1" y="9" width="3" height="2" fill="#fff"/><rect x="5" y="3" width="3" height="2" fill="#fff"/><rect x="5" y="6" width="3" height="2" fill="#fff"/><rect x="5" y="9" width="3" height="2" fill="#fff"/><rect x="9" y="3" width="3" height="2" fill="#fff"/><rect x="9" y="6" width="3" height="2" fill="#fff"/><rect x="9" y="9" width="3" height="2" fill="#fff"/></svg>
<div class="tx tr" style="left:121px;top:595px;transform:scaleX(1.0033)">dbo.Increment Date</div>
<svg class="a" style="left:85px;top:619px" width="9" height="9" viewBox="0 0 9 9"><rect x="0.5" y="0.5" width="8" height="8" rx="1.2" fill="#f7f7f7" stroke="#8c8c8c"/><path d="M2 4.5h5" stroke="#2e4d8f" stroke-width="1.1"/><path d="M4.5 2v5" stroke="#2e4d8f" stroke-width="1.1"/></svg>
<svg class="a" style="left:102px;top:616px" width="13" height="12" viewBox="0 0 13 12"><rect width="13" height="12" fill="#3a3a3a"/><rect x="1" y="3" width="3" height="2" fill="#fff"/><rect x="1" y="6" width="3" height="2" fill="#fff"/><rect x="1" y="9" width="3" height="2" fill="#fff"/><rect x="5" y="3" width="3" height="2" fill="#fff"/><rect x="5" y="6" width="3" height="2" fill="#fff"/><rect x="5" y="9" width="3" height="2" fill="#fff"/><rect x="9" y="3" width="3" height="2" fill="#fff"/><rect x="9" y="6" width="3" height="2" fill="#fff"/><rect x="9" y="9" width="3" height="2" fill="#fff"/></svg>
<div class="tx tr" style="left:121px;top:613px;transform:scaleX(0.9769)">dbo.Process Log</div>
<svg class="a" style="left:66px;top:637px" width="9" height="9" viewBox="0 0 9 9"><rect x="0.5" y="0.5" width="8" height="8" rx="1.2" fill="#f7f7f7" stroke="#8c8c8c"/><path d="M2 4.5h5" stroke="#2e4d8f" stroke-width="1.1"/></svg>
<svg class="a" style="left:83px;top:634px" width="13" height="11" viewBox="0 0 13 11"><path d="M5 0h8v11h-13v-9h5z" fill="#dcb67a"/><rect x="6" y="1" width="6" height="1" fill="#f5e6c8"/></svg>
<div class="tx tr" style="left:102px;top:631px;transform:scaleX(0.9594)">Views</div>
<svg class="a" style="left:85px;top:655px" width="9" height="9" viewBox="0 0 9 9"><rect x="0.5" y="0.5" width="8" height="8" rx="1.2" fill="#f7f7f7" stroke="#8c8c8c"/><path d="M2 4.5h5" stroke="#2e4d8f" stroke-width="1.1"/><path d="M4.5 2v5" stroke="#2e4d8f" stroke-width="1.1"/></svg>
<svg class="a" style="left:102px;top:652px" width="13" height="11" viewBox="0 0 13 11"><path d="M5 0h8v11h-13v-9h5z" fill="#dcb67a"/><rect x="6" y="1" width="6" height="1" fill="#f5e6c8"/></svg>
<div class="tx tr" style="left:121px;top:649px;transform:scaleX(0.9565)">System Views</div>
<svg class="a" style="left:85px;top:673px" width="9" height="9" viewBox="0 0 9 9"><rect x="0.5" y="0.5" width="8" height="8" rx="1.2" fill="#f7f7f7" stroke="#8c8c8c"/><path d="M2 4.5h5" stroke="#2e4d8f" stroke-width="1.1"/><path d="M4.5 2v5" stroke="#2e4d8f" stroke-width="1.1"/></svg>
<svg class="a" style="left:101px;top:669px" width="14" height="14" viewBox="0 0 14 14"><rect x="2.5" y="0.5" width="11" height="10.5" fill="none" stroke="#333"/><rect x="2" y="0" width="12" height="2" fill="#333"/><rect x="0.5" y="3.5" width="11" height="10" fill="none" stroke="#333"/><rect x="0" y="3" width="12" height="2" fill="#333"/><rect x="4" y="7" width="6" height="1.2" fill="#333"/></svg>
<div class="tx tr" style="left:121px;top:667px;transform:scaleX(0.9886)">dbo.1WK db Email</div>
<div class="a" style="left:119px;top:685px;width:197px;height:18px;background:#f0f0f0"></div>
<svg class="a" style="left:85px;top:691px" width="9" height="9" viewBox="0 0 9 9"><rect x="0.5" y="0.5" width="8" height="8" rx="1.2" fill="#f7f7f7" stroke="#8c8c8c"/><path d="M2 4.5h5" stroke="#2e4d8f" stroke-width="1.1"/><path d="M4.5 2v5" stroke="#2e4d8f" stroke-width="1.1"/></svg>
<svg class="a" style="left:101px;top:687px" width="14" height="14" viewBox="0 0 14 14"><rect x="2.5" y="0.5" width="11" height="10.5" fill="none" stroke="#333"/><rect x="2" y="0" width="12" height="2" fill="#333"/><rect x="0.5" y="3.5" width="11" height="10" fill="none" stroke="#333"/><rect x="0" y="3" width="12" height="2" fill="#333"/><rect x="4" y="7" width="6" height="1.2" fill="#333"/></svg>
<div class="tx tr" style="left:121px;top:685px;transform:scaleX(0.9750)">dbo.All Database Log Updates Today</div>
<svg class="a" style="left:85px;top:709px" width="9" height="9" viewBox="0 0 9 9"><rect x="0.5" y="0.5" width="8" height="8" rx="1.2" fill="#f7f7f7" stroke="#8c8c8c"/><path d="M2 4.5h5" stroke="#2e4d8f" stroke-width="1.1"/><path d="M4.5 2v5" stroke="#2e4d8f" stroke-width="1.1"/></svg>
<svg class="a" style="left:101px;top:705px" width="14" height="14" viewBox="0 0 14 14"><rect x="2.5" y="0.5" width="11" height="10.5" fill="none" stroke="#333"/><rect x="2" y="0" width="12" height="2" fill="#333"/><rect x="0.5" y="3.5" width="11" height="10" fill="none" stroke="#333"/><rect x="0" y="3" width="12" height="2" fill="#333"/><rect x="4" y="7" width="6" height="1.2" fill="#333"/></svg>
<div class="tx tr" style="left:121px;top:703px;transform:scaleX(0.9711)">dbo.All Error Database Log Updates Today</div>
<svg class="a" style="left:85px;top:727px" width="9" height="9" viewBox="0 0 9 9"><rect x="0.5" y="0.5" width="8" height="8" rx="1.2" fill="#f7f7f7" stroke="#8c8c8c"/><path d="M2 4.5h5" stroke="#2e4d8f" stroke-width="1.1"/><path d="M4.5 2v5" stroke="#2e4d8f" stroke-width="1.1"/></svg>
<svg class="a" style="left:101px;top:723px" width="14" height="14" viewBox="0 0 14 14"><rect x="2.5" y="0.5" width="11" height="10.5" fill="none" stroke="#333"/><rect x="2" y="0" width="12" height="2" fill="#333"/><rect x="0.5" y="3.5" width="11" height="10" fill="none" stroke="#333"/><rect x="0" y="3" width="12" height="2" fill="#333"/><rect x="4" y="7" width="6" height="1.2" fill="#333"/></svg>
<div class="tx tr" style="left:121px;top:721px;transform:scaleX(0.9857)">dbo.dItem Foreign Keys</div>
<svg class="a" style="left:85px;top:745px" width="9" height="9" viewBox="0 0 9 9"><rect x="0.5" y="0.5" width="8" height="8" rx="1.2" fill="#f7f7f7" stroke="#8c8c8c"/><path d="M2 4.5h5" stroke="#2e4d8f" stroke-width="1.1"/><path d="M4.5 2v5" stroke="#2e4d8f" stroke-width="1.1"/></svg>
<svg class="a" style="left:101px;top:741px" width="14" height="14" viewBox="0 0 14 14"><rect x="2.5" y="0.5" width="11" height="10.5" fill="none" stroke="#333"/><rect x="2" y="0" width="12" height="2" fill="#333"/><rect x="0.5" y="3.5" width="11" height="10" fill="none" stroke="#333"/><rect x="0" y="3" width="12" height="2" fill="#333"/><rect x="4" y="7" width="6" height="1.2" fill="#333"/></svg>
<div class="tx tr" style="left:121px;top:739px;transform:scaleX(1.0043)">dbo.fRedwood Inventory Var</div>
<svg class="a" style="left:85px;top:763px" width="9" height="9" viewBox="0 0 9 9"><rect x="0.5" y="0.5" width="8" height="8" rx="1.2" fill="#f7f7f7" stroke="#8c8c8c"/><path d="M2 4.5h5" stroke="#2e4d8f" stroke-width="1.1"/><path d="M4.5 2v5" stroke="#2e4d8f" stroke-width="1.1"/></svg>
<svg class="a" style="left:101px;top:759px" width="14" height="14" viewBox="0 0 14 14"><rect x="2.5" y="0.5" width="11" height="10.5" fill="none" stroke="#333"/><rect x="2" y="0" width="12" height="2" fill="#333"/><rect x="0.5" y="3.5" width="11" height="10" fill="none" stroke="#333"/><rect x="0" y="3" width="12" height="2" fill="#333"/><rect x="4" y="7" width="6" height="1.2" fill="#333"/></svg>
<div class="tx tr" style="left:121px;top:757px;transform:scaleX(1.0052)">dbo.Index Fragmentation</div>
<svg class="a" style="left:85px;top:781px" width="9" height="9" viewBox="0 0 9 9"><rect x="0.5" y="0.5" width="8" height="8" rx="1.2" fill="#f7f7f7" stroke="#8c8c8c"/><path d="M2 4.5h5" stroke="#2e4d8f" stroke-width="1.1"/><path d="M4.5 2v5" stroke="#2e4d8f" stroke-width="1.1"/></svg>
<svg class="a" style="left:101px;top:777px" width="14" height="14" viewBox="0 0 14 14"><rect x="2.5" y="0.5" width="11" height="10.5" fill="none" stroke="#333"/><rect x="2" y="0" width="12" height="2" fill="#333"/><rect x="0.5" y="3.5" width="11" height="10" fill="none" stroke="#333"/><rect x="0" y="3" width="12" height="2" fill="#333"/><rect x="4" y="7" width="6" height="1.2" fill="#333"/></svg>
<div class="tx tr" style="left:121px;top:775px;transform:scaleX(0.9906)">dbo.Shiner Missing Items fRedwood</div>
<svg class="a" style="left:66px;top:799px" width="9" height="9" viewBox="0 0 9 9"><rect x="0.5" y="0.5" width="8" height="8" rx="1.2" fill="#f7f7f7" stroke="#8c8c8c"/><path d="M2 4.5h5" stroke="#2e4d8f" stroke-width="1.1"/><path d="M4.5 2v5" stroke="#2e4d8f" stroke-width="1.1"/></svg>
<svg class="a" style="left:83px;top:796px" width="13" height="11" viewBox="0 0 13 11"><path d="M5 0h8v11h-13v-9h5z" fill="#dcb67a"/><rect x="6" y="1" width="6" height="1" fill="#f5e6c8"/></svg>
<div class="tx tr" style="left:102px;top:793px;transform:scaleX(0.9379)">External Resources</div>
<svg class="a" style="left:66px;top:817px" width="9" height="9" viewBox="0 0 9 9"><rect x="0.5" y="0.5" width="8" height="8" rx="1.2" fill="#f7f7f7" stroke="#8c8c8c"/><path d="M2 4.5h5" stroke="#2e4d8f" stroke-width="1.1"/><path d="M4.5 2v5" stroke="#2e4d8f" stroke-width="1.1"/></svg>
<svg class="a" style="left:83px;top:814px" width="13" height="11" viewBox="0 0 13 11"><path d="M5 0h8v11h-13v-9h5z" fill="#dcb67a"/><rect x="6" y="1" width="6" height="1" fill="#f5e6c8"/></svg>
<div class="tx tr" style="left:102px;top:811px;transform:scaleX(0.9789)">Synonyms</div>
<svg class="a" style="left:66px;top:835px" width="9" height="9" viewBox="0 0 9 9"><rect x="0.5" y="0.5" width="8" height="8" rx="1.2" fill="#f7f7f7" stroke="#8c8c8c"/><path d="M2 4.5h5" stroke="#2e4d8f" stroke-width="1.1"/><path d="M4.5 2v5" stroke="#2e4d8f" stroke-width="1.1"/></svg>
<svg class="a" style="left:83px;top:832px" width="13" height="11" viewBox="0 0 13 11"><path d="M5 0h8v11h-13v-9h5z" fill="#dcb67a"/><rect x="6" y="1" width="6" height="1" fill="#f5e6c8"/></svg>
<div class="tx tr" style="left:102px;top:829px;transform:scaleX(0.9945)">Programmability</div>
<div class="a" style="left:436px;top:0;width:16px;height:838px;background:#f0f0f0"></div>
<div class="a" style="left:436px;top:200px;width:15px;height:480px;background:#cdcdcd"></div>
<svg class="a" style="left:436px;top:6px" width="16" height="10" viewBox="0 0 16 10"><path d="M4.5 7.5l3.5-3.5l3.5 3.5" fill="none" stroke="#555" stroke-width="2"/></svg>
</div>
<div class="a" style="left:5px;top:53px;width:1px;height:839px;background:#828790"></div>
<div class="a" style="left:458px;top:53px;width:1px;height:839px;background:#828790"></div>
<div class="a" style="left:466px;top:5px;width:267px;height:21px;background:#fff29d"></div>
<div class="tx" style="left:470px;top:7px;color:#1e1e1e;font-size:11.5px">SQLQuery5.sql - shi...ER\leo.pickard (56))*</div>
<svg class="a" style="left:698px;top:8px" width="34" height="16" viewBox="0 0 34 16"><rect x="2" y="7" width="3" height="1" fill="#5c5132"/><rect x="5" y="4" width="1.2" height="7" fill="#5c5132"/><rect x="6" y="5" width="4" height="1" fill="#5c5132"/><rect x="6" y="9" width="4" height="1.4" fill="#5c5132"/><rect x="9" y="5" width="1.1" height="5" fill="#5c5132"/><path d="M20.5 3l9 8M29.5 3l-9 8" stroke="#5c5132" stroke-width="1.4"/></svg>
<svg class="a" style="left:1898px;top:12px" width="14" height="8" viewBox="0 0 14 8"><path d="M2 2h9l-4.5 4.5z" fill="#e6e9f0"/></svg>
<div class="a" style="left:466px;top:24px;width:1446px;height:2px;background:#fff29d"></div>
<div class="a" style="left:466px;top:26px;width:1445px;height:227px;background:#fff"></div>
<div class="a" style="left:466px;top:26px;width:1px;height:866px;background:#8d9cc0"></div>
<div class="a" style="left:467px;top:26px;width:18px;height:227px;background:#e6e7e8"></div>
<div class="a" style="left:543px;top:222px;width:1348px;height:18px;border:2px solid #eaeaf2"></div>
<div class="ln" style="left:483px;top:27.60px">1</div>
<div class="cd" style="left:544px;top:27.60px"><span class="kw">SELECT</span> <span class="kw">TOP</span> <span class="gr">(</span>1000<span class="gr">)</span> [Id]</div>
<div class="ln" style="left:483px;top:45.42px">2</div>
<div class="cd" style="left:544px;top:45.42px">      <span class="gr">,</span>[Date]</div>
<div class="ln" style="left:483px;top:63.24px">3</div>
<div class="cd" style="left:544px;top:63.24px">      <span class="gr">,</span>[Time]</div>
<div class="ln" style="left:483px;top:81.06px">4</div>
<div class="cd" style="left:544px;top:81.06px">      <span class="gr">,</span>[Level]</div>
<div class="ln" style="left:483px;top:98.88px">5</div>
<div class="cd" style="left:544px;top:98.88px">      <span class="gr">,</span>[File Name]</div>
<div class="ln" style="left:483px;top:116.70px">6</div>
<div class="cd" style="left:544px;top:116.70px">      <span class="gr">,</span>[Table]</div>
<div class="ln" style="left:483px;top:134.52px">7</div>
<div class="cd" style="left:544px;top:134.52px">      <span class="gr">,</span>[Action]</div>
<div class="ln" style="left:483px;top:152.34px">8</div>
<div class="cd" style="left:544px;top:152.34px">      <span class="gr">,</span>[Message]</div>
<div class="ln" style="left:483px;top:170.16px">9</div>
<div class="cd" style="left:544px;top:170.16px">      <span class="gr">,</span>[Row Count]</div>
<div class="ln" style="left:483px;top:187.98px">10</div>
<div class="cd" style="left:544px;top:187.98px">      <span class="gr">,</span>[Start Date]</div>
<div class="ln" style="left:483px;top:205.80px">11</div>
<div class="cd" style="left:544px;top:205.80px">      <span class="gr">,</span>[End Date]</div>
<div class="ln" style="left:483px;top:223.62px">12</div>
<div class="cd" style="left:544px;top:223.62px">  <span class="kw">FROM</span> [All Database Log Updates Today]</div>
<div class="a" style="left:525px;top:133.1px;width:5px;height:18px;background:#fee35b"></div>
<div class="a" style="left:525px;top:222.2px;width:5px;height:18px;background:#fee35b"></div>
<svg class="a" style="left:530px;top:28px" width="14" height="214" viewBox="0 0 14 214"><rect x="3.5" y="2.5" width="8" height="9" fill="#fff" stroke="#a5a5a5"/><path d="M5.5 6.5h4" stroke="#555"/><path d="M8.5 11.5v199.5h4" fill="none" stroke="#a5a5a5"/></svg>
<div class="a" style="left:1892px;top:26px;width:19px;height:227px;background:#e8e8ec"></div>
<div class="a" style="left:1892px;top:26px;width:19px;height:17px;background:#e6ebf8;border-left:1px solid #8d9cc0;border-bottom:1px solid #8d9cc0"></div>
<svg class="a" style="left:1892px;top:26px" width="19" height="17" viewBox="0 0 19 17"><path d="M9.5 3v11M4 7.5h11M4 9.5h11" stroke="#1e1e1e" stroke-width="1"/><path d="M7.5 4.5l2-2l2 2M7.5 12.5l2 2l2-2" fill="none" stroke="#1e1e1e"/></svg>
<svg class="a" style="left:1892px;top:45px" width="19" height="10" viewBox="0 0 19 10"><path d="M5 9h9l-4.5-5z" fill="#868999"/></svg>
<div class="a" style="left:1896px;top:60px;width:11px;height:89px;background:#c2c3c9"></div>
<div class="a" style="left:1893px;top:99px;width:4px;height:11px;background:#fee35b"></div>
<div class="a" style="left:1893px;top:136px;width:4px;height:10px;background:#fee35b"></div>
<div class="a" style="left:1892px;top:140px;width:19px;height:2px;background:#0000c0"></div>
<svg class="a" style="left:1892px;top:240px" width="19" height="10" viewBox="0 0 19 10"><path d="M5 2h9l-4.5 5z" fill="#868999"/></svg>
<div class="a" style="left:467px;top:253px;width:1444px;height:17px;background:#e8e8ec"></div>
<div class="a" style="left:467px;top:253px;width:60px;height:17px;background:#fff;border:1px solid #b4bcd2"></div>
<div class="tx" style="left:470px;top:253px;font-size:11px;color:#000">105 %</div>
<svg class="a" style="left:514px;top:253px" width="14" height="17" viewBox="0 0 14 17"><path d="M4 8h6l-3 3z" fill="#1e1e1e"/></svg>
<svg class="a" style="left:530px;top:253px" width="12" height="17" viewBox="0 0 12 17"><path d="M8 4v9l-5-4.5z" fill="#c2c3c9"/></svg>
<svg class="a" style="left:1878px;top:253px" width="12" height="17" viewBox="0 0 12 17"><path d="M4 4v9l5-4.5z" fill="#c2c3c9"/></svg>
<div class="a" style="left:467px;top:270px;width:1444px;height:622px;background:#f0f0f0"></div>
<div class="a" style="left:467px;top:296px;width:1444px;height:596px;background:#fff"></div>
<div class="a" style="left:539px;top:295px;width:1372px;height:1px;background:#d9d9d9"></div>
<div class="a" style="left:467px;top:274px;width:73px;height:23px;background:#fff;border-top:1px solid #d9d9d9;border-right:1px solid #d9d9d9"></div>
<div class="a" style="left:539px;top:276px;width:79px;height:20px;background:#f0f0f0;border:1px solid #d9d9d9"></div>
<svg class="a" style="left:477px;top:278px" width="13" height="12" viewBox="0 0 13 12"><rect width="13" height="12" fill="#3a3a3a"/><rect x="1" y="3" width="3" height="2" fill="#fff"/><rect x="1" y="6" width="3" height="2" fill="#fff"/><rect x="1" y="9" width="3" height="2" fill="#fff"/><rect x="5" y="3" width="3" height="2" fill="#fff"/><rect x="5" y="6" width="3" height="2" fill="#fff"/><rect x="5" y="9" width="3" height="2" fill="#fff"/><rect x="9" y="3" width="3" height="2" fill="#fff"/><rect x="9" y="6" width="3" height="2" fill="#fff"/><rect x="9" y="9" width="3" height="2" fill="#fff"/></svg>
<div class="g" style="left:497px;top:276px;transform:scaleX(.87)">Results</div>
<svg class="a" style="left:544px;top:278px" width="16" height="16" viewBox="0 0 16 16"><rect x="8" y="1" width="7" height="11" fill="#333"/><rect x="9" y="2" width="5" height="1" fill="#fff"/><rect x="9" y="4" width="5" height="1" fill="#fff"/><rect x="12" y="9" width="1" height="1" fill="#fff"/><path d="M1.5 5.5h5l2 2v7h-7z" fill="#fff" stroke="#333"/><rect x="3" y="8" width="4" height="1" fill="#333"/><rect x="3" y="10" width="4" height="1" fill="#333"/><rect x="3" y="12" width="4" height="1" fill="#333"/></svg>
<div class="g" style="left:566px;top:277px;transform:scaleX(.87)">Messages</div>
<div class="a" style="left:471px;top:297px;width:1436px;height:592px;background:#fff;border:1px solid #abadb3"></div>
<div class="g" style="left:509px;top:298px;transform:scaleX(.87)">Id</div>
<div class="g" style="left:562px;top:298px;transform:scaleX(.87)">Date</div>
<div class="g" style="left:632px;top:298px;transform:scaleX(.87)">Time</div>
<div class="g" style="left:735px;top:298px;transform:scaleX(.87)">Level</div>
<div class="g" style="left:777px;top:298px;transform:scaleX(.87)">File Name</div>
<div class="g" style="left:957px;top:298px;transform:scaleX(.87)">Table</div>
<div class="g" style="left:1055px;top:298px;transform:scaleX(.87)">Action</div>
<div class="g" style="left:1308px;top:298px;transform:scaleX(.87)">Message</div>
<div class="g" style="left:1684px;top:298px;transform:scaleX(.87)">Row Count</div>
<div class="g" style="left:1753px;top:298px;transform:scaleX(.87)">Start Date</div>
<div class="g" style="left:1823px;top:298px;transform:scaleX(.87)">End Date</div>
<svg class="a" style="left:0;top:0" width="1918" height="892" viewBox="0 0 1918 892"><rect x="1679" y="317" width="68" height="18" fill="#ffffe1"/><rect x="1748" y="317" width="69" height="18" fill="#ffffe1"/><rect x="1818" y="317" width="70" height="18" fill="#ffffe1"/><rect x="1679" y="336" width="68" height="18" fill="#ffffe1"/><rect x="1748" y="336" width="69" height="18" fill="#ffffe1"/><rect x="1818" y="336" width="70" height="18" fill="#ffffe1"/><rect x="1679" y="355" width="68" height="18" fill="#ffffe1"/><rect x="1748" y="355" width="69" height="18" fill="#ffffe1"/><rect x="1818" y="355" width="70" height="18" fill="#ffffe1"/><rect x="1748" y="374" width="69" height="18" fill="#ffffe1"/><rect x="1818" y="374" width="70" height="18" fill="#ffffe1"/><rect x="1679" y="393" width="68" height="18" fill="#ffffe1"/><rect x="1748" y="393" width="69" height="18" fill="#ffffe1"/><rect x="1818" y="393" width="70" height="18" fill="#ffffe1"/><rect x="1679" y="412" width="68" height="18" fill="#ffffe1"/><rect x="1748" y="412" width="69" height="18" fill="#ffffe1"/><rect x="1818" y="412" width="70" height="18" fill="#ffffe1"/><rect x="1679" y="431" width="68" height="18" fill="#ffffe1"/><rect x="1748" y="431" width="69" height="18" fill="#ffffe1"/><rect x="1818" y="431" width="70" height="18" fill="#ffffe1"/><rect x="1748" y="450" width="69" height="18" fill="#ffffe1"/><rect x="1818" y="450" width="70" height="18" fill="#ffffe1"/><rect x="1679" y="469" width="68" height="18" fill="#ffffe1"/><rect x="1748" y="469" width="69" height="18" fill="#ffffe1"/><rect x="1818" y="469" width="70" height="18" fill="#ffffe1"/><rect x="1679" y="488" width="68" height="18" fill="#ffffe1"/><rect x="1748" y="488" width="69" height="18" fill="#ffffe1"/><rect x="1818" y="488" width="70" height="18" fill="#ffffe1"/><rect x="1679" y="507" width="68" height="18" fill="#ffffe1"/><rect x="1748" y="507" width="69" height="18" fill="#ffffe1"/><rect x="1818" y="507" width="70" height="18" fill="#ffffe1"/><rect x="1748" y="526" width="69" height="18" fill="#ffffe1"/><rect x="1818" y="526" width="70" height="18" fill="#ffffe1"/><rect x="1679" y="545" width="68" height="18" fill="#ffffe1"/><rect x="1748" y="545" width="69" height="18" fill="#ffffe1"/><rect x="1818" y="545" width="70" height="18" fill="#ffffe1"/><rect x="1679" y="564" width="68" height="18" fill="#ffffe1"/><rect x="1748" y="564" width="69" height="18" fill="#ffffe1"/><rect x="1818" y="564" width="70" height="18" fill="#ffffe1"/><rect x="1748" y="583" width="69" height="18" fill="#ffffe1"/><rect x="1818" y="583" width="70" height="18" fill="#ffffe1"/><rect x="1679" y="602" width="68" height="18" fill="#ffffe1"/><rect x="1748" y="602" width="69" height="18" fill="#ffffe1"/><rect x="1818" y="602" width="70" height="18" fill="#ffffe1"/><rect x="1679" y="621" width="68" height="18" fill="#ffffe1"/><rect x="1748" y="621" width="69" height="18" fill="#ffffe1"/><rect x="1818" y="621" width="70" height="18" fill="#ffffe1"/><rect x="1679" y="640" width="68" height="18" fill="#ffffe1"/><rect x="1748" y="640" width="69" height="18" fill="#ffffe1"/><rect x="1818" y="640" width="70" height="18" fill="#ffffe1"/><rect x="1748" y="659" width="69" height="18" fill="#ffffe1"/><rect x="1818" y="659" width="70" height="18" fill="#ffffe1"/><rect x="1679" y="678" width="68" height="18" fill="#ffffe1"/><rect x="1748" y="678" width="69" height="18" fill="#ffffe1"/><rect x="1818" y="678" width="70" height="18" fill="#ffffe1"/><rect x="1679" y="697" width="68" height="18" fill="#ffffe1"/><rect x="1748" y="697" width="69" height="18" fill="#ffffe1"/><rect x="1818" y="697" width="70" height="18" fill="#ffffe1"/><rect x="1679" y="716" width="68" height="18" fill="#ffffe1"/><rect x="1748" y="716" width="69" height="18" fill="#ffffe1"/><rect x="1818" y="716" width="70" height="18" fill="#ffffe1"/><rect x="1679" y="735" width="68" height="18" fill="#ffffe1"/><rect x="1679" y="754" width="68" height="18" fill="#ffffe1"/><rect x="1679" y="773" width="68" height="18" fill="#ffffe1"/><rect x="1748" y="773" width="69" height="18" fill="#ffffe1"/><rect x="1818" y="773" width="70" height="18" fill="#ffffe1"/><rect x="1679" y="830" width="68" height="18" fill="#ffffe1"/><rect x="1748" y="830" width="69" height="18" fill="#ffffe1"/><rect x="1818" y="830" width="70" height="18" fill="#ffffe1"/><rect x="1679" y="849" width="68" height="18" fill="#ffffe1"/><rect x="1748" y="849" width="69" height="18" fill="#ffffe1"/><rect x="1818" y="849" width="70" height="18" fill="#ffffe1"/><rect x="1679" y="868" width="68" height="18" fill="#ffffe1"/><rect x="1748" y="868" width="69" height="18" fill="#ffffe1"/><rect x="1818" y="868" width="70" height="18" fill="#ffffe1"/><path d="M472 316.5H1888" stroke="#ebebeb"/><path d="M472 335.5H1888" stroke="#ebebeb"/><path d="M472 354.5H1888" stroke="#ebebeb"/><path d="M472 373.5H1888" stroke="#ebebeb"/><path d="M472 392.5H1888" stroke="#ebebeb"/><path d="M472 411.5H1888" stroke="#ebebeb"/><path d="M472 430.5H1888" stroke="#ebebeb"/><path d="M472 449.5H1888" stroke="#ebebeb"/><path d="M472 468.5H1888" stroke="#ebebeb"/><path d="M472 487.5H1888" stroke="#ebebeb"/><path d="M472 506.5H1888" stroke="#ebebeb"/><path d="M472 525.5H1888" stroke="#ebebeb"/><path d="M472 544.5H1888" stroke="#ebebeb"/><path d="M472 563.5H1888" stroke="#ebebeb"/><path d="M472 582.5H1888" stroke="#ebebeb"/><path d="M472 601.5H1888" stroke="#ebebeb"/><path d="M472 620.5H1888" stroke="#ebebeb"/><path d="M472 639.5H1888" stroke="#ebebeb"/><path d="M472 658.5H1888" stroke="#ebebeb"/><path d="M472 677.5H1888" stroke="#ebebeb"/><path d="M472 696.5H1888" stroke="#ebebeb"/><path d="M472 715.5H1888" stroke="#ebebeb"/><path d="M472 734.5H1888" stroke="#ebebeb"/><path d="M472 753.5H1888" stroke="#ebebeb"/><path d="M472 772.5H1888" stroke="#ebebeb"/><path d="M472 791.5H1888" stroke="#ebebeb"/><path d="M472 810.5H1888" stroke="#ebebeb"/><path d="M472 829.5H1888" stroke="#ebebeb"/><path d="M472 848.5H1888" stroke="#ebebeb"/><path d="M472 867.5H1888" stroke="#ebebeb"/><path d="M472 886.5H1888" stroke="#ebebeb"/><path d="M503.5 298V886" stroke="#ebebeb"/><path d="M556.5 298V886" stroke="#ebebeb"/><path d="M626.5 298V886" stroke="#ebebeb"/><path d="M729.5 298V886" stroke="#ebebeb"/><path d="M771.5 298V886" stroke="#ebebeb"/><path d="M951.5 298V886" stroke="#ebebeb"/><path d="M1049.5 298V886" stroke="#ebebeb"/><path d="M1302.5 298V886" stroke="#ebebeb"/><path d="M1678.5 298V886" stroke="#ebebeb"/><path d="M1747.5 298V886" stroke="#ebebeb"/><path d="M1817.5 298V886" stroke="#ebebeb"/><path d="M1888.5 298V886" stroke="#ebebeb"/></svg>
<div class="g" style="left:478px;top:317px;transform:scaleX(0.92)">10</div>
<div class="g" style="left:511px;top:317px;transform:scaleX(0.92)">116096</div>
<div class="g" style="left:564px;top:317px;transform:scaleX(0.9)">2025-09-29</div>
<div class="g" style="left:634px;top:317px;transform:scaleX(0.9)">03:00:20.0000000</div>
<div class="g" style="left:737px;top:317px;transform:scaleX(0.86)">INFO</div>
<div class="g" style="left:779px;top:317px;transform:scaleX(0.902)">Update dCustomer Table.py</div>
<div class="g" style="left:959px;top:317px;transform:scaleX(0.885)">dCustomer</div>
<div class="g" style="left:1057px;top:317px;transform:scaleX(0.895)">Executed UKEU dCustomer query.</div>
<div class="g" style="left:1310px;top:317px;transform:scaleX(0.885)">pandas dataframe has been sucessfuly created from sql statement.</div>
<div class="g" style="left:1686px;top:317px;transform:scaleX(0.885)">NULL</div>
<div class="g" style="left:1755px;top:317px;transform:scaleX(0.885)">NULL</div>
<div class="g" style="left:1825px;top:317px;transform:scaleX(0.885)">NULL</div>
<div class="g" style="left:478px;top:336px;transform:scaleX(0.92)">11</div>
<div class="g" style="left:511px;top:336px;transform:scaleX(0.92)">116097</div>
<div class="g" style="left:564px;top:336px;transform:scaleX(0.9)">2025-09-29</div>
<div class="g" style="left:634px;top:336px;transform:scaleX(0.9)">03:00:20.0000000</div>
<div class="g" style="left:737px;top:336px;transform:scaleX(0.86)">INFO</div>
<div class="g" style="left:779px;top:336px;transform:scaleX(0.902)">Update dCustomer Table.py</div>
<div class="g" style="left:959px;top:336px;transform:scaleX(0.885)">dCustomer</div>
<div class="g" style="left:1057px;top:336px;transform:scaleX(0.895)">Executed US dCustomer query.</div>
<div class="g" style="left:1310px;top:336px;transform:scaleX(0.885)">pandas dataframe has been sucessfuly created from sql statement.</div>
<div class="g" style="left:1686px;top:336px;transform:scaleX(0.885)">NULL</div>
<div class="g" style="left:1755px;top:336px;transform:scaleX(0.885)">NULL</div>
<div class="g" style="left:1825px;top:336px;transform:scaleX(0.885)">NULL</div>
<div class="g" style="left:478px;top:355px;transform:scaleX(0.92)">12</div>
<div class="g" style="left:511px;top:355px;transform:scaleX(0.92)">116098</div>
<div class="g" style="left:564px;top:355px;transform:scaleX(0.9)">2025-09-29</div>
<div class="g" style="left:634px;top:355px;transform:scaleX(0.9)">03:00:20.0000000</div>
<div class="g" style="left:737px;top:355px;transform:scaleX(0.86)">INFO</div>
<div class="g" style="left:779px;top:355px;transform:scaleX(0.902)">Update dCustomer Table.py</div>
<div class="g" style="left:959px;top:355px;transform:scaleX(0.885)">dCustomer</div>
<div class="g" style="left:1057px;top:355px;transform:scaleX(0.895)">Execute truncate dCustomer table.</div>
<div class="g" style="left:1310px;top:355px;transform:scaleX(0.885)">Sql procedure has been executed Sucessfully</div>
<div class="g" style="left:1686px;top:355px;transform:scaleX(0.885)">NULL</div>
<div class="g" style="left:1755px;top:355px;transform:scaleX(0.885)">NULL</div>
<div class="g" style="left:1825px;top:355px;transform:scaleX(0.885)">NULL</div>
<div class="g" style="left:478px;top:374px;transform:scaleX(0.92)">13</div>
<div class="g" style="left:511px;top:374px;transform:scaleX(0.92)">116099</div>
<div class="g" style="left:564px;top:374px;transform:scaleX(0.9)">2025-09-29</div>
<div class="g" style="left:634px;top:374px;transform:scaleX(0.9)">03:00:21.0000000</div>
<div class="g" style="left:737px;top:374px;transform:scaleX(0.86)">INFO</div>
<div class="g" style="left:779px;top:374px;transform:scaleX(0.902)">Update dCustomer Table.py</div>
<div class="g" style="left:959px;top:374px;transform:scaleX(0.885)">dCustomer</div>
<div class="g" style="left:1057px;top:374px;transform:scaleX(0.895)">Write dataframe to dCustomer table.</div>
<div class="g" style="left:1310px;top:374px;transform:scaleX(0.885)">the pandas dataframe has been sucessfully written to the database table.</div>
<div class="g" style="left:1686px;top:374px;transform:scaleX(0.92)">10836</div>
<div class="g" style="left:1755px;top:374px;transform:scaleX(0.885)">NULL</div>
<div class="g" style="left:1825px;top:374px;transform:scaleX(0.885)">NULL</div>
<div class="g" style="left:478px;top:393px;transform:scaleX(0.92)">14</div>
<div class="g" style="left:511px;top:393px;transform:scaleX(0.92)">116100</div>
<div class="g" style="left:564px;top:393px;transform:scaleX(0.9)">2025-09-29</div>
<div class="g" style="left:634px;top:393px;transform:scaleX(0.9)">03:00:23.0000000</div>
<div class="g" style="left:737px;top:393px;transform:scaleX(0.86)">INFO</div>
<div class="g" style="left:779px;top:393px;transform:scaleX(0.902)">Update fExchange Rates Table.py</div>
<div class="g" style="left:959px;top:393px;transform:scaleX(0.885)">fExchange Rates</div>
<div class="g" style="left:1057px;top:393px;transform:scaleX(0.895)">Executed UKEU fExchange Rates query.</div>
<div class="g" style="left:1310px;top:393px;transform:scaleX(0.885)">pandas dataframe has been sucessfuly created from sql statement.</div>
<div class="g" style="left:1686px;top:393px;transform:scaleX(0.885)">NULL</div>
<div class="g" style="left:1755px;top:393px;transform:scaleX(0.885)">NULL</div>
<div class="g" style="left:1825px;top:393px;transform:scaleX(0.885)">NULL</div>
<div class="g" style="left:478px;top:412px;transform:scaleX(0.92)">15</div>
<div class="g" style="left:511px;top:412px;transform:scaleX(0.92)">116101</div>
<div class="g" style="left:564px;top:412px;transform:scaleX(0.9)">2025-09-29</div>
<div class="g" style="left:634px;top:412px;transform:scaleX(0.9)">03:00:24.0000000</div>
<div class="g" style="left:737px;top:412px;transform:scaleX(0.86)">INFO</div>
<div class="g" style="left:779px;top:412px;transform:scaleX(0.902)">Update fExchange Rates Table.py</div>
<div class="g" style="left:959px;top:412px;transform:scaleX(0.885)">fExchange Rates</div>
<div class="g" style="left:1057px;top:412px;transform:scaleX(0.895)">Executed US fExchange Rates query.</div>
<div class="g" style="left:1310px;top:412px;transform:scaleX(0.885)">pandas dataframe has been sucessfuly created from sql statement.</div>
<div class="g" style="left:1686px;top:412px;transform:scaleX(0.885)">NULL</div>
<div class="g" style="left:1755px;top:412px;transform:scaleX(0.885)">NULL</div>
<div class="g" style="left:1825px;top:412px;transform:scaleX(0.885)">NULL</div>
<div class="g" style="left:478px;top:431px;transform:scaleX(0.92)">16</div>
<div class="g" style="left:511px;top:431px;transform:scaleX(0.92)">116102</div>
<div class="g" style="left:564px;top:431px;transform:scaleX(0.9)">2025-09-29</div>
<div class="g" style="left:634px;top:431px;transform:scaleX(0.9)">03:00:26.0000000</div>
<div class="g" style="left:737px;top:431px;transform:scaleX(0.86)">INFO</div>
<div class="g" style="left:779px;top:431px;transform:scaleX(0.902)">Update fExchange Rates Table.py</div>
<div class="g" style="left:959px;top:431px;transform:scaleX(0.885)">fExchange Rates</div>
<div class="g" style="left:1057px;top:431px;transform:scaleX(0.895)">Execute truncate fExchange Rates table.</div>
<div class="g" style="left:1310px;top:431px;transform:scaleX(0.885)">Sql procedure has been executed Sucessfully</div>
<div class="g" style="left:1686px;top:431px;transform:scaleX(0.885)">NULL</div>
<div class="g" style="left:1755px;top:431px;transform:scaleX(0.885)">NULL</div>
<div class="g" style="left:1825px;top:431px;transform:scaleX(0.885)">NULL</div>
<div class="g" style="left:478px;top:450px;transform:scaleX(0.92)">17</div>
<div class="g" style="left:511px;top:450px;transform:scaleX(0.92)">116103</div>
<div class="g" style="left:564px;top:450px;transform:scaleX(0.9)">2025-09-29</div>
<div class="g" style="left:634px;top:450px;transform:scaleX(0.9)">03:00:31.0000000</div>
<div class="g" style="left:737px;top:450px;transform:scaleX(0.86)">INFO</div>
<div class="g" style="left:779px;top:450px;transform:scaleX(0.902)">Update fExchange Rates Table.py</div>
<div class="g" style="left:959px;top:450px;transform:scaleX(0.885)">fExchange Rates</div>
<div class="g" style="left:1057px;top:450px;transform:scaleX(0.895)">Write dataframe to fExchange Rates table.</div>
<div class="g" style="left:1310px;top:450px;transform:scaleX(0.885)">the pandas dataframe has been sucessfully written to the database table.</div>
<div class="g" style="left:1686px;top:450px;transform:scaleX(0.92)">92543</div>
<div class="g" style="left:1755px;top:450px;transform:scaleX(0.885)">NULL</div>
<div class="g" style="left:1825px;top:450px;transform:scaleX(0.885)">NULL</div>
<div class="g" style="left:478px;top:469px;transform:scaleX(0.92)">18</div>
<div class="g" style="left:511px;top:469px;transform:scaleX(0.92)">116104</div>
<div class="g" style="left:564px;top:469px;transform:scaleX(0.9)">2025-09-29</div>
<div class="g" style="left:634px;top:469px;transform:scaleX(0.9)">03:00:50.0000000</div>
<div class="g" style="left:737px;top:469px;transform:scaleX(0.86)">INFO</div>
<div class="g" style="left:779px;top:469px;transform:scaleX(0.902)">Update dItem Table.py</div>
<div class="g" style="left:959px;top:469px;transform:scaleX(0.885)">dItem</div>
<div class="g" style="left:1057px;top:469px;transform:scaleX(0.895)">Executed UKEU dItem query.</div>
<div class="g" style="left:1310px;top:469px;transform:scaleX(0.885)">pandas dataframe has been sucessfuly created from sql statement.</div>
<div class="g" style="left:1686px;top:469px;transform:scaleX(0.885)">NULL</div>
<div class="g" style="left:1755px;top:469px;transform:scaleX(0.885)">NULL</div>
<div class="g" style="left:1825px;top:469px;transform:scaleX(0.885)">NULL</div>
<div class="g" style="left:478px;top:488px;transform:scaleX(0.92)">19</div>
<div class="g" style="left:511px;top:488px;transform:scaleX(0.92)">116105</div>
<div class="g" style="left:564px;top:488px;transform:scaleX(0.9)">2025-09-29</div>
<div class="g" style="left:634px;top:488px;transform:scaleX(0.9)">03:00:50.0000000</div>
<div class="g" style="left:737px;top:488px;transform:scaleX(0.86)">INFO</div>
<div class="g" style="left:779px;top:488px;transform:scaleX(0.902)">Update dItem Table.py</div>
<div class="g" style="left:959px;top:488px;transform:scaleX(0.885)">dItem</div>
<div class="g" style="left:1057px;top:488px;transform:scaleX(0.895)">Executed US dItem query.</div>
<div class="g" style="left:1310px;top:488px;transform:scaleX(0.885)">pandas dataframe has been sucessfuly created from sql statement.</div>
<div class="g" style="left:1686px;top:488px;transform:scaleX(0.885)">NULL</div>
<div class="g" style="left:1755px;top:488px;transform:scaleX(0.885)">NULL</div>
<div class="g" style="left:1825px;top:488px;transform:scaleX(0.885)">NULL</div>
<div class="g" style="left:478px;top:507px;transform:scaleX(0.92)">20</div>
<div class="g" style="left:511px;top:507px;transform:scaleX(0.92)">116106</div>
<div class="g" style="left:564px;top:507px;transform:scaleX(0.9)">2025-09-29</div>
<div class="g" style="left:634px;top:507px;transform:scaleX(0.9)">03:00:57.0000000</div>
<div class="g" style="left:737px;top:507px;transform:scaleX(0.86)">INFO</div>
<div class="g" style="left:779px;top:507px;transform:scaleX(0.902)">Update dItem Table.py</div>
<div class="g" style="left:959px;top:507px;transform:scaleX(0.885)">dItem</div>
<div class="g" style="left:1057px;top:507px;transform:scaleX(0.895)">Execute truncate dItem table.</div>
<div class="g" style="left:1310px;top:507px;transform:scaleX(0.885)">Sql procedure has been executed Sucessfully</div>
<div class="g" style="left:1686px;top:507px;transform:scaleX(0.885)">NULL</div>
<div class="g" style="left:1755px;top:507px;transform:scaleX(0.885)">NULL</div>
<div class="g" style="left:1825px;top:507px;transform:scaleX(0.885)">NULL</div>
<div class="g" style="left:478px;top:526px;transform:scaleX(0.92)">21</div>
<div class="g" style="left:511px;top:526px;transform:scaleX(0.92)">116107</div>
<div class="g" style="left:564px;top:526px;transform:scaleX(0.9)">2025-09-29</div>
<div class="g" style="left:634px;top:526px;transform:scaleX(0.9)">03:01:24.0000000</div>
<div class="g" style="left:737px;top:526px;transform:scaleX(0.86)">INFO</div>
<div class="g" style="left:779px;top:526px;transform:scaleX(0.902)">Update dItem Table.py</div>
<div class="g" style="left:959px;top:526px;transform:scaleX(0.885)">dItem</div>
<div class="g" style="left:1057px;top:526px;transform:scaleX(0.895)">Write dataframe to dItem.</div>
<div class="g" style="left:1310px;top:526px;transform:scaleX(0.885)">the pandas dataframe has been sucessfully written to the database table.</div>
<div class="g" style="left:1686px;top:526px;transform:scaleX(0.92)">173101</div>
<div class="g" style="left:1755px;top:526px;transform:scaleX(0.885)">NULL</div>
<div class="g" style="left:1825px;top:526px;transform:scaleX(0.885)">NULL</div>
<div class="g" style="left:478px;top:545px;transform:scaleX(0.92)">22</div>
<div class="g" style="left:511px;top:545px;transform:scaleX(0.92)">116108</div>
<div class="g" style="left:564px;top:545px;transform:scaleX(0.9)">2025-09-29</div>
<div class="g" style="left:634px;top:545px;transform:scaleX(0.9)">03:01:30.0000000</div>
<div class="g" style="left:737px;top:545px;transform:scaleX(0.86)">INFO</div>
<div class="g" style="left:779px;top:545px;transform:scaleX(0.902)">Update dRecord Link.py</div>
<div class="g" style="left:959px;top:545px;transform:scaleX(0.885)">dRecord Link</div>
<div class="g" style="left:1057px;top:545px;transform:scaleX(0.895)">Executed UKEU dRecord Link query.</div>
<div class="g" style="left:1310px;top:545px;transform:scaleX(0.885)">pandas dataframe has been sucessfuly created from sql statement.</div>
<div class="g" style="left:1686px;top:545px;transform:scaleX(0.885)">NULL</div>
<div class="g" style="left:1755px;top:545px;transform:scaleX(0.885)">NULL</div>
<div class="g" style="left:1825px;top:545px;transform:scaleX(0.885)">NULL</div>
<div class="g" style="left:478px;top:564px;transform:scaleX(0.92)">23</div>
<div class="g" style="left:511px;top:564px;transform:scaleX(0.92)">116109</div>
<div class="g" style="left:564px;top:564px;transform:scaleX(0.9)">2025-09-29</div>
<div class="g" style="left:634px;top:564px;transform:scaleX(0.9)">03:01:36.0000000</div>
<div class="g" style="left:737px;top:564px;transform:scaleX(0.86)">INFO</div>
<div class="g" style="left:779px;top:564px;transform:scaleX(0.902)">Update dRecord Link.py</div>
<div class="g" style="left:959px;top:564px;transform:scaleX(0.885)">dRecord Link</div>
<div class="g" style="left:1057px;top:564px;transform:scaleX(0.895)">Execute truncate dCountry table.</div>
<div class="g" style="left:1310px;top:564px;transform:scaleX(0.885)">Sql procedure has been executed Sucessfully</div>
<div class="g" style="left:1686px;top:564px;transform:scaleX(0.885)">NULL</div>
<div class="g" style="left:1755px;top:564px;transform:scaleX(0.885)">NULL</div>
<div class="g" style="left:1825px;top:564px;transform:scaleX(0.885)">NULL</div>
<div class="g" style="left:478px;top:583px;transform:scaleX(0.92)">24</div>
<div class="g" style="left:511px;top:583px;transform:scaleX(0.92)">116110</div>
<div class="g" style="left:564px;top:583px;transform:scaleX(0.9)">2025-09-29</div>
<div class="g" style="left:634px;top:583px;transform:scaleX(0.9)">03:01:56.0000000</div>
<div class="g" style="left:737px;top:583px;transform:scaleX(0.86)">INFO</div>
<div class="g" style="left:779px;top:583px;transform:scaleX(0.902)">Update dRecord Link.py</div>
<div class="g" style="left:959px;top:583px;transform:scaleX(0.885)">dRecord Link</div>
<div class="g" style="left:1057px;top:583px;transform:scaleX(0.895)">Write dataframe to dRecord Link table.</div>
<div class="g" style="left:1310px;top:583px;transform:scaleX(0.885)">the pandas dataframe has been sucessfully written to the database table.</div>
<div class="g" style="left:1686px;top:583px;transform:scaleX(0.92)">376873</div>
<div class="g" style="left:1755px;top:583px;transform:scaleX(0.885)">NULL</div>
<div class="g" style="left:1825px;top:583px;transform:scaleX(0.885)">NULL</div>
<div class="g" style="left:478px;top:602px;transform:scaleX(0.92)">25</div>
<div class="g" style="left:511px;top:602px;transform:scaleX(0.92)">116111</div>
<div class="g" style="left:564px;top:602px;transform:scaleX(0.9)">2025-09-29</div>
<div class="g" style="left:634px;top:602px;transform:scaleX(0.9)">03:02:21.0000000</div>
<div class="g" style="left:737px;top:602px;transform:scaleX(0.86)">INFO</div>
<div class="g" style="left:779px;top:602px;transform:scaleX(0.902)">Update dInventory Table.py</div>
<div class="g" style="left:959px;top:602px;transform:scaleX(0.885)">dInventory</div>
<div class="g" style="left:1057px;top:602px;transform:scaleX(0.895)">Executed UKEU dInventory query.</div>
<div class="g" style="left:1310px;top:602px;transform:scaleX(0.885)">pandas dataframe has been sucessfuly created from sql statement.</div>
<div class="g" style="left:1686px;top:602px;transform:scaleX(0.885)">NULL</div>
<div class="g" style="left:1755px;top:602px;transform:scaleX(0.885)">NULL</div>
<div class="g" style="left:1825px;top:602px;transform:scaleX(0.885)">NULL</div>
<div class="g" style="left:478px;top:621px;transform:scaleX(0.92)">26</div>
<div class="g" style="left:511px;top:621px;transform:scaleX(0.92)">116112</div>
<div class="g" style="left:564px;top:621px;transform:scaleX(0.9)">2025-09-29</div>
<div class="g" style="left:634px;top:621px;transform:scaleX(0.9)">03:02:21.0000000</div>
<div class="g" style="left:737px;top:621px;transform:scaleX(0.86)">INFO</div>
<div class="g" style="left:779px;top:621px;transform:scaleX(0.902)">Update dInventory Table.py</div>
<div class="g" style="left:959px;top:621px;transform:scaleX(0.885)">dInventory</div>
<div class="g" style="left:1057px;top:621px;transform:scaleX(0.895)">Executed US dInventory query.</div>
<div class="g" style="left:1310px;top:621px;transform:scaleX(0.885)">pandas dataframe has been sucessfuly created from sql statement.</div>
<div class="g" style="left:1686px;top:621px;transform:scaleX(0.885)">NULL</div>
<div class="g" style="left:1755px;top:621px;transform:scaleX(0.885)">NULL</div>
<div class="g" style="left:1825px;top:621px;transform:scaleX(0.885)">NULL</div>
<div class="g" style="left:478px;top:640px;transform:scaleX(0.92)">27</div>
<div class="g" style="left:511px;top:640px;transform:scaleX(0.92)">116113</div>
<div class="g" style="left:564px;top:640px;transform:scaleX(0.9)">2025-09-29</div>
<div class="g" style="left:634px;top:640px;transform:scaleX(0.9)">03:02:22.0000000</div>
<div class="g" style="left:737px;top:640px;transform:scaleX(0.86)">INFO</div>
<div class="g" style="left:779px;top:640px;transform:scaleX(0.902)">Update dInventory Table.py</div>
<div class="g" style="left:959px;top:640px;transform:scaleX(0.885)">dInventory</div>
<div class="g" style="left:1057px;top:640px;transform:scaleX(0.895)">Execute truncate dInventory table.</div>
<div class="g" style="left:1310px;top:640px;transform:scaleX(0.885)">Sql procedure has been executed Sucessfully</div>
<div class="g" style="left:1686px;top:640px;transform:scaleX(0.885)">NULL</div>
<div class="g" style="left:1755px;top:640px;transform:scaleX(0.885)">NULL</div>
<div class="g" style="left:1825px;top:640px;transform:scaleX(0.885)">NULL</div>
<div class="g" style="left:478px;top:659px;transform:scaleX(0.92)">28</div>
<div class="g" style="left:511px;top:659px;transform:scaleX(0.92)">116114</div>
<div class="g" style="left:564px;top:659px;transform:scaleX(0.9)">2025-09-29</div>
<div class="g" style="left:634px;top:659px;transform:scaleX(0.9)">03:02:22.0000000</div>
<div class="g" style="left:737px;top:659px;transform:scaleX(0.86)">INFO</div>
<div class="g" style="left:779px;top:659px;transform:scaleX(0.902)">Update dInventory Table.py</div>
<div class="g" style="left:959px;top:659px;transform:scaleX(0.885)">dInventory</div>
<div class="g" style="left:1057px;top:659px;transform:scaleX(0.895)">Write dataframe to dInventory.</div>
<div class="g" style="left:1310px;top:659px;transform:scaleX(0.885)">the pandas dataframe has been sucessfully written to the database table.</div>
<div class="g" style="left:1686px;top:659px;transform:scaleX(0.92)">9683</div>
<div class="g" style="left:1755px;top:659px;transform:scaleX(0.885)">NULL</div>
<div class="g" style="left:1825px;top:659px;transform:scaleX(0.885)">NULL</div>
<div class="g" style="left:478px;top:678px;transform:scaleX(0.92)">29</div>
<div class="g" style="left:511px;top:678px;transform:scaleX(0.92)">116115</div>
<div class="g" style="left:564px;top:678px;transform:scaleX(0.9)">2025-09-29</div>
<div class="g" style="left:634px;top:678px;transform:scaleX(0.9)">03:02:24.0000000</div>
<div class="g" style="left:737px;top:678px;transform:scaleX(0.86)">INFO</div>
<div class="g" style="left:779px;top:678px;transform:scaleX(0.902)">Update fSales Table.py</div>
<div class="g" style="left:959px;top:678px;transform:scaleX(0.885)">Increment Date</div>
<div class="g" style="left:1057px;top:678px;transform:scaleX(0.895)">Executed get last fSales increment date query fo...</div>
<div class="g" style="left:1310px;top:678px;transform:scaleX(0.885)">pandas dataframe has been sucessfuly created from sql statement.</div>
<div class="g" style="left:1686px;top:678px;transform:scaleX(0.885)">NULL</div>
<div class="g" style="left:1755px;top:678px;transform:scaleX(0.885)">NULL</div>
<div class="g" style="left:1825px;top:678px;transform:scaleX(0.885)">NULL</div>
<div class="g" style="left:478px;top:697px;transform:scaleX(0.92)">30</div>
<div class="g" style="left:511px;top:697px;transform:scaleX(0.92)">116116</div>
<div class="g" style="left:564px;top:697px;transform:scaleX(0.9)">2025-09-29</div>
<div class="g" style="left:634px;top:697px;transform:scaleX(0.9)">03:02:24.0000000</div>
<div class="g" style="left:737px;top:697px;transform:scaleX(0.86)">INFO</div>
<div class="g" style="left:779px;top:697px;transform:scaleX(0.902)">Update fSales Table.py</div>
<div class="g" style="left:959px;top:697px;transform:scaleX(0.885)">Increment Date</div>
<div class="g" style="left:1057px;top:697px;transform:scaleX(0.895)">Executed get last fSales increment date query fo...</div>
<div class="g" style="left:1310px;top:697px;transform:scaleX(0.885)">pandas dataframe has been sucessfuly created from sql statement.</div>
<div class="g" style="left:1686px;top:697px;transform:scaleX(0.885)">NULL</div>
<div class="g" style="left:1755px;top:697px;transform:scaleX(0.885)">NULL</div>
<div class="g" style="left:1825px;top:697px;transform:scaleX(0.885)">NULL</div>
<div class="g" style="left:478px;top:716px;transform:scaleX(0.92)">31</div>
<div class="g" style="left:511px;top:716px;transform:scaleX(0.92)">116117</div>
<div class="g" style="left:564px;top:716px;transform:scaleX(0.9)">2025-09-29</div>
<div class="g" style="left:634px;top:716px;transform:scaleX(0.9)">03:02:24.0000000</div>
<div class="g" style="left:737px;top:716px;transform:scaleX(0.86)">INFO</div>
<div class="g" style="left:779px;top:716px;transform:scaleX(0.902)">Update fSales Table.py</div>
<div class="g" style="left:959px;top:716px;transform:scaleX(0.885)">Increment Date</div>
<div class="g" style="left:1057px;top:716px;transform:scaleX(0.895)">Executed get last fSales increment date query fo...</div>
<div class="g" style="left:1310px;top:716px;transform:scaleX(0.885)">pandas dataframe has been sucessfuly created from sql statement.</div>
<div class="g" style="left:1686px;top:716px;transform:scaleX(0.885)">NULL</div>
<div class="g" style="left:1755px;top:716px;transform:scaleX(0.885)">NULL</div>
<div class="g" style="left:1825px;top:716px;transform:scaleX(0.885)">NULL</div>
<div class="g" style="left:478px;top:735px;transform:scaleX(0.92)">32</div>
<div class="g" style="left:511px;top:735px;transform:scaleX(0.92)">116120</div>
<div class="g" style="left:564px;top:735px;transform:scaleX(0.9)">2025-09-29</div>
<div class="g" style="left:634px;top:735px;transform:scaleX(0.9)">03:12:14.0000000</div>
<div class="g" style="left:737px;top:735px;transform:scaleX(0.86)">INFO</div>
<div class="g" style="left:779px;top:735px;transform:scaleX(0.902)">Update fSales Table.py</div>
<div class="g" style="left:959px;top:735px;transform:scaleX(0.885)">fSales</div>
<div class="g" style="left:1057px;top:735px;transform:scaleX(0.895)">Executed UKEU fSales query.</div>
<div class="g" style="left:1310px;top:735px;transform:scaleX(0.885)">pandas dataframe has been sucessfuly created from sql statement.</div>
<div class="g" style="left:1686px;top:735px;transform:scaleX(0.885)">NULL</div>
<div class="g" style="left:1755px;top:735px;transform:scaleX(0.92)">2023-04-30</div>
<div class="g" style="left:1825px;top:735px;transform:scaleX(0.92)">2025-09-28</div>
<div class="g" style="left:478px;top:754px;transform:scaleX(0.92)">33</div>
<div class="g" style="left:511px;top:754px;transform:scaleX(0.92)">116121</div>
<div class="g" style="left:564px;top:754px;transform:scaleX(0.9)">2025-09-29</div>
<div class="g" style="left:634px;top:754px;transform:scaleX(0.9)">03:12:24.0000000</div>
<div class="g" style="left:737px;top:754px;transform:scaleX(0.86)">INFO</div>
<div class="g" style="left:779px;top:754px;transform:scaleX(0.902)">Update fSales Table.py</div>
<div class="g" style="left:959px;top:754px;transform:scaleX(0.885)">fSales</div>
<div class="g" style="left:1057px;top:754px;transform:scaleX(0.895)">Executed US fSales query.</div>
<div class="g" style="left:1310px;top:754px;transform:scaleX(0.885)">pandas dataframe has been sucessfuly created from sql statement.</div>
<div class="g" style="left:1686px;top:754px;transform:scaleX(0.885)">NULL</div>
<div class="g" style="left:1755px;top:754px;transform:scaleX(0.92)">2023-04-30</div>
<div class="g" style="left:1825px;top:754px;transform:scaleX(0.92)">2025-09-28</div>
<div class="g" style="left:478px;top:773px;transform:scaleX(0.92)">34</div>
<div class="g" style="left:511px;top:773px;transform:scaleX(0.92)">116122</div>
<div class="g" style="left:564px;top:773px;transform:scaleX(0.9)">2025-09-29</div>
<div class="g" style="left:634px;top:773px;transform:scaleX(0.9)">03:12:24.0000000</div>
<div class="g" style="left:737px;top:773px;transform:scaleX(0.86)">INFO</div>
<div class="g" style="left:779px;top:773px;transform:scaleX(0.902)">Update fSales Table.py</div>
<div class="g" style="left:959px;top:773px;transform:scaleX(0.885)">fSales Staging</div>
<div class="g" style="left:1057px;top:773px;transform:scaleX(0.895)">Execute truncate fSales Staging table.</div>
<div class="g" style="left:1310px;top:773px;transform:scaleX(0.885)">Sql procedure has been executed Sucessfully</div>
<div class="g" style="left:1686px;top:773px;transform:scaleX(0.885)">NULL</div>
<div class="g" style="left:1755px;top:773px;transform:scaleX(0.885)">NULL</div>
<div class="g" style="left:1825px;top:773px;transform:scaleX(0.885)">NULL</div>
<div class="g" style="left:478px;top:792px;transform:scaleX(0.92)">35</div>
<div class="g" style="left:511px;top:792px;transform:scaleX(0.92)">116123</div>
<div class="g" style="left:564px;top:792px;transform:scaleX(0.9)">2025-09-29</div>
<div class="g" style="left:634px;top:792px;transform:scaleX(0.9)">03:13:57.0000000</div>
<div class="g" style="left:737px;top:792px;transform:scaleX(0.86)">INFO</div>
<div class="g" style="left:779px;top:792px;transform:scaleX(0.902)">Update fSales Table.py</div>
<div class="g" style="left:959px;top:792px;transform:scaleX(0.885)">fSales Staging</div>
<div class="g" style="left:1057px;top:792px;transform:scaleX(0.895)">Write dataframe to fSales Staging table.</div>
<div class="g" style="left:1310px;top:792px;transform:scaleX(0.885)">the pandas dataframe has been sucessfully written to the database table.</div>
<div class="g" style="left:1686px;top:792px;transform:scaleX(0.92)">1074318</div>
<div class="g" style="left:1755px;top:792px;transform:scaleX(0.92)">2023-05-01</div>
<div class="g" style="left:1825px;top:792px;transform:scaleX(0.92)">2025-09-28</div>
<div class="g" style="left:478px;top:811px;transform:scaleX(0.92)">36</div>
<div class="g" style="left:511px;top:811px;transform:scaleX(0.92)">116125</div>
<div class="g" style="left:564px;top:811px;transform:scaleX(0.9)">2025-09-29</div>
<div class="g" style="left:634px;top:811px;transform:scaleX(0.9)">03:15:26.0000000</div>
<div class="g" style="left:737px;top:811px;transform:scaleX(0.86)">INFO</div>
<div class="g" style="left:779px;top:811px;transform:scaleX(0.902)">Update fSales Table.py</div>
<div class="g" style="left:959px;top:811px;transform:scaleX(0.885)">fSales</div>
<div class="g" style="left:1057px;top:811px;transform:scaleX(0.895)">Execute [Insert New Rows Into fSales] Procedure.</div>
<div class="g" style="left:1310px;top:811px;transform:scaleX(0.885)">Sql procedure has been executed Sucessfully</div>
<div class="g" style="left:1686px;top:811px;transform:scaleX(0.92)">1074318</div>
<div class="g" style="left:1755px;top:811px;transform:scaleX(0.92)">2023-05-01</div>
<div class="g" style="left:1825px;top:811px;transform:scaleX(0.92)">2025-09-28</div>
<div class="g" style="left:478px;top:830px;transform:scaleX(0.92)">37</div>
<div class="g" style="left:511px;top:830px;transform:scaleX(0.92)">116126</div>
<div class="g" style="left:564px;top:830px;transform:scaleX(0.9)">2025-09-29</div>
<div class="g" style="left:634px;top:830px;transform:scaleX(0.9)">03:15:30.0000000</div>
<div class="g" style="left:737px;top:830px;transform:scaleX(0.86)">INFO</div>
<div class="g" style="left:779px;top:830px;transform:scaleX(0.902)">Update dGL Accounts.py</div>
<div class="g" style="left:959px;top:830px;transform:scaleX(0.885)">dGL Accounts</div>
<div class="g" style="left:1057px;top:830px;transform:scaleX(0.895)">Executed UKEU dGL Accounts query.</div>
<div class="g" style="left:1310px;top:830px;transform:scaleX(0.885)">pandas dataframe has been sucessfuly created from sql statement.</div>
<div class="g" style="left:1686px;top:830px;transform:scaleX(0.885)">NULL</div>
<div class="g" style="left:1755px;top:830px;transform:scaleX(0.885)">NULL</div>
<div class="g" style="left:1825px;top:830px;transform:scaleX(0.885)">NULL</div>
<div class="g" style="left:478px;top:849px;transform:scaleX(0.92)">38</div>
<div class="g" style="left:511px;top:849px;transform:scaleX(0.92)">116127</div>
<div class="g" style="left:564px;top:849px;transform:scaleX(0.9)">2025-09-29</div>
<div class="g" style="left:634px;top:849px;transform:scaleX(0.9)">03:15:31.0000000</div>
<div class="g" style="left:737px;top:849px;transform:scaleX(0.86)">INFO</div>
<div class="g" style="left:779px;top:849px;transform:scaleX(0.902)">Update dGL Accounts.py</div>
<div class="g" style="left:959px;top:849px;transform:scaleX(0.885)">dGL Accounts</div>
<div class="g" style="left:1057px;top:849px;transform:scaleX(0.895)">Executed US dGL Accounts query.</div>
<div class="g" style="left:1310px;top:849px;transform:scaleX(0.885)">pandas dataframe has been sucessfuly created from sql statement.</div>
<div class="g" style="left:1686px;top:849px;transform:scaleX(0.885)">NULL</div>
<div class="g" style="left:1755px;top:849px;transform:scaleX(0.885)">NULL</div>
<div class="g" style="left:1825px;top:849px;transform:scaleX(0.885)">NULL</div>
<div class="g" style="left:478px;top:868px;transform:scaleX(0.92)">39</div>
<div class="g" style="left:511px;top:868px;transform:scaleX(0.92)">116128</div>
<div class="g" style="left:564px;top:868px;transform:scaleX(0.9)">2025-09-29</div>
<div class="g" style="left:634px;top:868px;transform:scaleX(0.9)">03:15:32.0000000</div>
<div class="g" style="left:737px;top:868px;transform:scaleX(0.86)">INFO</div>
<div class="g" style="left:779px;top:868px;transform:scaleX(0.902)">Update dGL Accounts.py</div>
<div class="g" style="left:959px;top:868px;transform:scaleX(0.885)">dGL Accounts</div>
<div class="g" style="left:1057px;top:868px;transform:scaleX(0.895)">Truncate dGL Accounts table.</div>
<div class="g" style="left:1310px;top:868px;transform:scaleX(0.885)">Sql procedure has been executed Sucessfully</div>
<div class="g" style="left:1686px;top:868px;transform:scaleX(0.885)">NULL</div>
<div class="g" style="left:1755px;top:868px;transform:scaleX(0.885)">NULL</div>
<div class="g" style="left:1825px;top:868px;transform:scaleX(0.885)">NULL</div>
<div class="a" style="left:1888px;top:298px;width:18px;height:590px;background:#fff"></div>
<div class="a" style="left:1890px;top:298px;width:16px;height:590px;background:#f0f0f0"></div>
<div class="a" style="left:1890px;top:347px;width:15px;height:107px;background:#cdcdcd"></div>
<svg class="a" style="left:1888px;top:300px" width="18" height="14" viewBox="0 0 18 14"><path d="M5.5 9.5l3.5-3.5l3.5 3.5" fill="none" stroke="#555" stroke-width="1.9"/></svg>
<svg class="a" style="left:1888px;top:872px" width="18" height="14" viewBox="0 0 18 14"><path d="M5.5 5.5l3.5 3.5l3.5-3.5" fill="none" stroke="#555" stroke-width="1.9"/></svg>
<div class="a" style="left:1911px;top:26px;width:1px;height:866px;background:#8d9cc0"></div>
</body></html>
